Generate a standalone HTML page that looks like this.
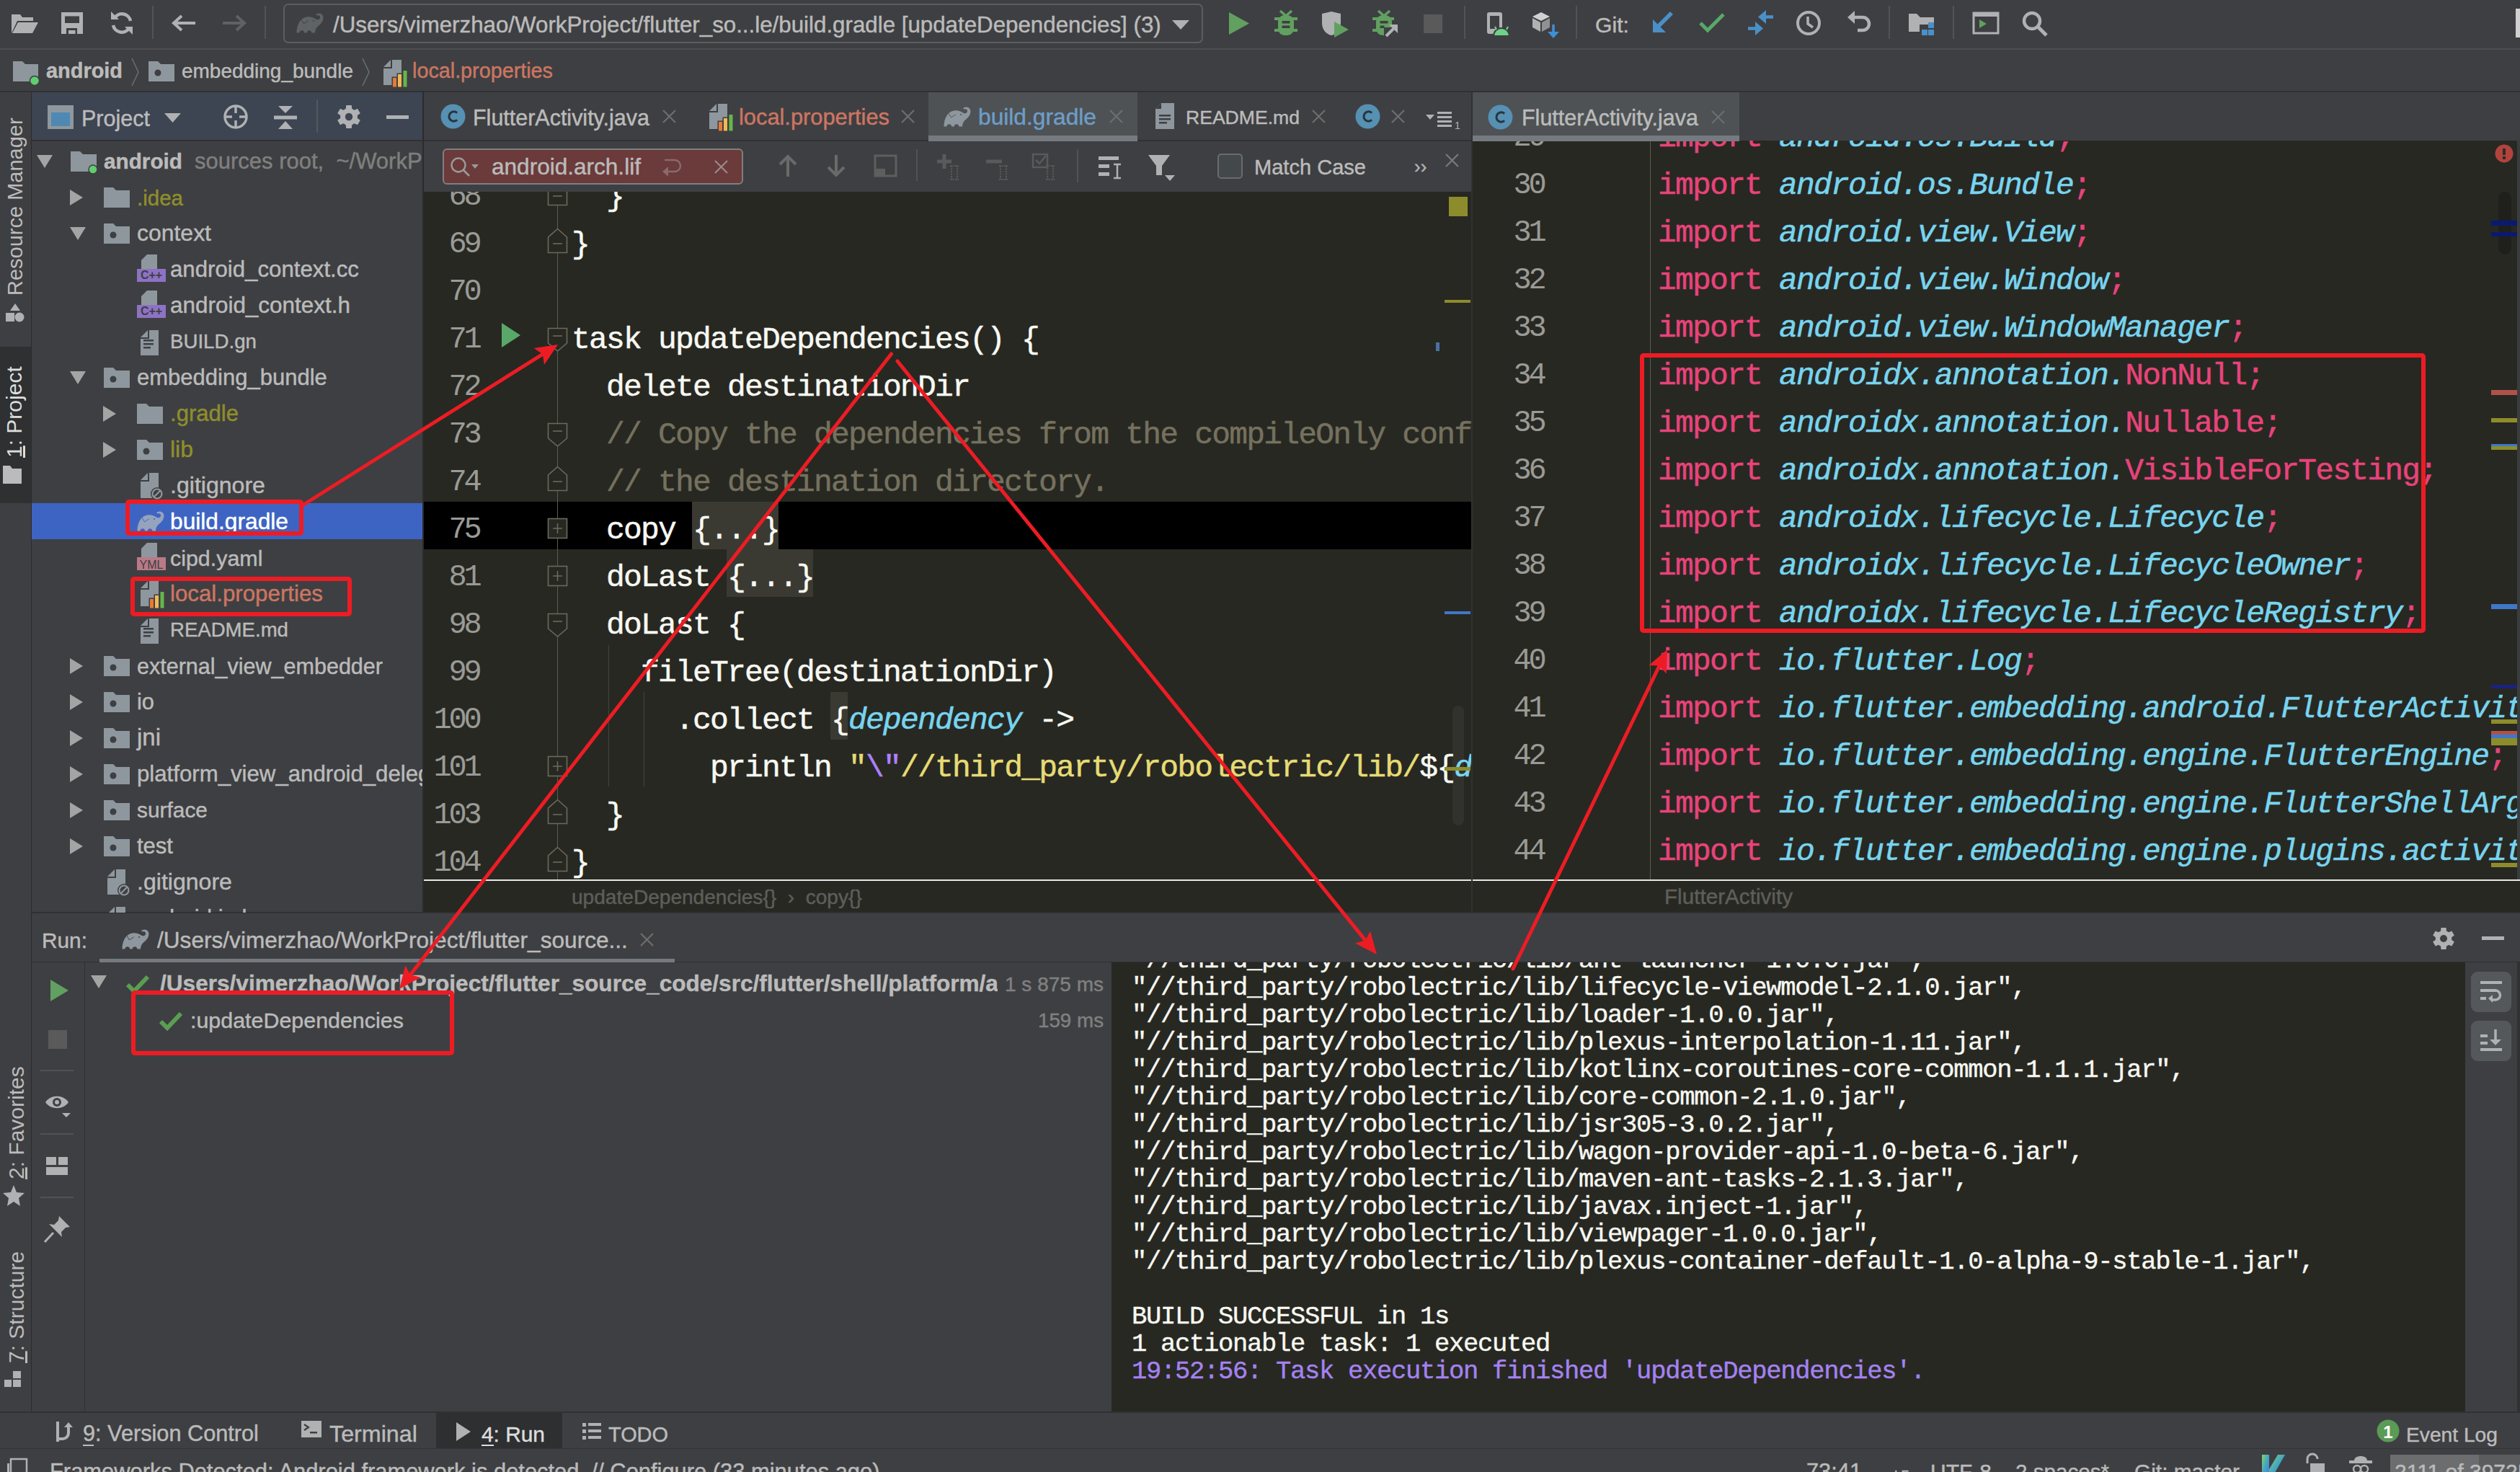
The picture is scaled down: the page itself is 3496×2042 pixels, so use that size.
<!DOCTYPE html><html><head><meta charset="utf-8"><style>html,body{margin:0;padding:0;}body{width:3496px;height:2042px;overflow:hidden;position:relative;background:#3e3f42;font-family:"Liberation Sans",sans-serif}div,svg{position:absolute;box-sizing:border-box}svg{overflow:visible}</style></head><body><div style="left:0px;top:0px;width:3496px;height:2042px;background:#3e3f42;"></div>
<div style="left:0px;top:67px;width:3496px;height:2px;background:#4b4d4f;"></div>
<div style="left:0px;top:126px;width:3496px;height:2px;background:#2f3133;"></div>
<div style="left:43px;top:127px;width:1px;height:1832px;background:#2b2b2b;"></div>
<div style="left:0px;top:481px;width:43px;height:217px;background:#2e3032;"></div>
<div style="left:44px;top:128px;width:542px;height:67px;background:#3d4452;"></div>
<div style="left:44px;top:194px;width:542px;height:2px;background:#2f3133;"></div>
<div style="left:586px;top:127px;width:2px;height:1139px;background:#2b2b2b;"></div>
<div style="left:588px;top:128px;width:1453px;height:67px;background:#3e3f42;"></div>
<div style="left:588px;top:194px;width:1453px;height:2px;background:#2f3133;"></div>
<div style="left:588px;top:196px;width:1453px;height:70px;background:#3e3f42;"></div>
<div style="left:588px;top:266px;width:1453px;height:1000px;background:#272822;"></div>
<div style="left:2041px;top:127px;width:2px;height:1139px;background:#303234;"></div>
<div style="left:2043px;top:128px;width:1453px;height:67px;background:#3e3f42;"></div>
<div style="left:2043px;top:195px;width:1453px;height:1071px;background:#272822;"></div>
<div style="left:588px;top:1220px;width:1453px;height:2px;background:#e8e8e8;"></div>
<div style="left:2043px;top:1220px;width:1453px;height:2px;background:#e8e8e8;"></div>
<div style="left:44px;top:1266px;width:3452px;height:69px;background:#3e3f42;"></div>
<div style="left:44px;top:1265px;width:3452px;height:2px;background:#2f3133;"></div>
<div style="left:44px;top:1334px;width:3452px;height:1px;background:#2f3133;"></div>
<div style="left:117px;top:1335px;width:1px;height:623px;background:#2f3133;"></div>
<div style="left:1542px;top:1335px;width:1878px;height:623px;background:#272822;"></div>
<div style="left:3420px;top:1335px;width:76px;height:623px;background:#3e3f42;"></div>
<div style="left:0px;top:1958px;width:3496px;height:2px;background:#2f3133;"></div>
<div style="left:605px;top:1960px;width:175px;height:50px;background:#2d2f31;"></div>
<div style="left:0px;top:2009px;width:3496px;height:1px;background:#323436;"></div>
<div style="left:588px;top:266px;width:1453px;height:954px;overflow:hidden">
<div style="left:0px;top:430px;width:1453px;height:66px;background:#000000;"></div>
<div style="left:372px;top:430px;width:120px;height:66px;background:#3b3a32;"></div>
<div style="left:420px;top:496px;width:120px;height:66px;background:#3b3a32;"></div>
<div style="left:564px;top:694px;width:24px;height:66px;background:#3b3a32;"></div>
<div style="left:256px;top:629px;width:1px;height:196px;background:#45443b;"></div>
<div style="left:305px;top:694px;width:1px;height:131px;background:#45443b;"></div>
<div style="left:185px;top:0px;width:1px;height:954px;background:#5d5c50;"></div>
<div style="left:34.4px;top:-27.1px;font-family:'Liberation Mono',monospace;font-size:42px;line-height:69.3px;color:#9a9a96;font-weight:normal;white-space:pre;letter-spacing:-4.2px">68</div>
<div style="left:205px;top:-28.2px;font-family:'Liberation Mono',monospace;font-size:43px;line-height:71.0px;color:#f8f8f2;font-weight:normal;white-space:pre;letter-spacing:-1.80px;-webkit-text-stroke:0.5px currentColor;"><span style="color:#f8f8f2;">  }</span></div>
<div style="left:34.4px;top:38.9px;font-family:'Liberation Mono',monospace;font-size:42px;line-height:69.3px;color:#9a9a96;font-weight:normal;white-space:pre;letter-spacing:-4.2px">69</div>
<div style="left:205px;top:37.8px;font-family:'Liberation Mono',monospace;font-size:43px;line-height:71.0px;color:#f8f8f2;font-weight:normal;white-space:pre;letter-spacing:-1.80px;-webkit-text-stroke:0.5px currentColor;"><span style="color:#f8f8f2;">}</span></div>
<div style="left:34.4px;top:104.8px;font-family:'Liberation Mono',monospace;font-size:42px;line-height:69.3px;color:#9a9a96;font-weight:normal;white-space:pre;letter-spacing:-4.2px">70</div>
<div style="left:34.4px;top:170.8px;font-family:'Liberation Mono',monospace;font-size:42px;line-height:69.3px;color:#9a9a96;font-weight:normal;white-space:pre;letter-spacing:-4.2px">71</div>
<div style="left:205px;top:169.8px;font-family:'Liberation Mono',monospace;font-size:43px;line-height:71.0px;color:#f8f8f2;font-weight:normal;white-space:pre;letter-spacing:-1.80px;-webkit-text-stroke:0.5px currentColor;"><span style="color:#f8f8f2;">task updateDependencies() {</span></div>
<div style="left:34.4px;top:236.8px;font-family:'Liberation Mono',monospace;font-size:42px;line-height:69.3px;color:#9a9a96;font-weight:normal;white-space:pre;letter-spacing:-4.2px">72</div>
<div style="left:205px;top:235.8px;font-family:'Liberation Mono',monospace;font-size:43px;line-height:71.0px;color:#f8f8f2;font-weight:normal;white-space:pre;letter-spacing:-1.80px;-webkit-text-stroke:0.5px currentColor;"><span style="color:#f8f8f2;">  delete destinationDir</span></div>
<div style="left:34.4px;top:302.9px;font-family:'Liberation Mono',monospace;font-size:42px;line-height:69.3px;color:#9a9a96;font-weight:normal;white-space:pre;letter-spacing:-4.2px">73</div>
<div style="left:205px;top:301.8px;font-family:'Liberation Mono',monospace;font-size:43px;line-height:71.0px;color:#f8f8f2;font-weight:normal;white-space:pre;letter-spacing:-1.80px;-webkit-text-stroke:0.5px currentColor;"><span style="color:#75715e;">  // Copy the dependencies from the compileOnly configuration into</span></div>
<div style="left:34.4px;top:368.9px;font-family:'Liberation Mono',monospace;font-size:42px;line-height:69.3px;color:#9a9a96;font-weight:normal;white-space:pre;letter-spacing:-4.2px">74</div>
<div style="left:205px;top:367.8px;font-family:'Liberation Mono',monospace;font-size:43px;line-height:71.0px;color:#f8f8f2;font-weight:normal;white-space:pre;letter-spacing:-1.80px;-webkit-text-stroke:0.5px currentColor;"><span style="color:#75715e;">  // the destination directory.</span></div>
<div style="left:34.4px;top:434.9px;font-family:'Liberation Mono',monospace;font-size:42px;line-height:69.3px;color:#9a9a96;font-weight:normal;white-space:pre;letter-spacing:-4.2px">75</div>
<div style="left:205px;top:433.8px;font-family:'Liberation Mono',monospace;font-size:43px;line-height:71.0px;color:#f8f8f2;font-weight:normal;white-space:pre;letter-spacing:-1.80px;-webkit-text-stroke:0.5px currentColor;"><span style="color:#f8f8f2;">  copy {...}</span></div>
<div style="left:34.4px;top:500.9px;font-family:'Liberation Mono',monospace;font-size:42px;line-height:69.3px;color:#9a9a96;font-weight:normal;white-space:pre;letter-spacing:-4.2px">81</div>
<div style="left:205px;top:499.8px;font-family:'Liberation Mono',monospace;font-size:43px;line-height:71.0px;color:#f8f8f2;font-weight:normal;white-space:pre;letter-spacing:-1.80px;-webkit-text-stroke:0.5px currentColor;"><span style="color:#f8f8f2;">  doLast {...}</span></div>
<div style="left:34.4px;top:566.9px;font-family:'Liberation Mono',monospace;font-size:42px;line-height:69.3px;color:#9a9a96;font-weight:normal;white-space:pre;letter-spacing:-4.2px">98</div>
<div style="left:205px;top:565.8px;font-family:'Liberation Mono',monospace;font-size:43px;line-height:71.0px;color:#f8f8f2;font-weight:normal;white-space:pre;letter-spacing:-1.80px;-webkit-text-stroke:0.5px currentColor;"><span style="color:#f8f8f2;">  doLast {</span></div>
<div style="left:34.4px;top:632.9px;font-family:'Liberation Mono',monospace;font-size:42px;line-height:69.3px;color:#9a9a96;font-weight:normal;white-space:pre;letter-spacing:-4.2px">99</div>
<div style="left:205px;top:631.8px;font-family:'Liberation Mono',monospace;font-size:43px;line-height:71.0px;color:#f8f8f2;font-weight:normal;white-space:pre;letter-spacing:-1.80px;-webkit-text-stroke:0.5px currentColor;"><span style="color:#f8f8f2;">    fileTree(destinationDir)</span></div>
<div style="left:13.399999999999999px;top:698.9px;font-family:'Liberation Mono',monospace;font-size:42px;line-height:69.3px;color:#9a9a96;font-weight:normal;white-space:pre;letter-spacing:-4.2px">100</div>
<div style="left:205px;top:697.8px;font-family:'Liberation Mono',monospace;font-size:43px;line-height:71.0px;color:#f8f8f2;font-weight:normal;white-space:pre;letter-spacing:-1.80px;-webkit-text-stroke:0.5px currentColor;"><span style="color:#f8f8f2;">      .collect {</span><span style="color:#78d4ee;font-style:italic">dependency</span><span style="color:#f8f8f2;"> -&gt;</span></div>
<div style="left:13.399999999999999px;top:764.9px;font-family:'Liberation Mono',monospace;font-size:42px;line-height:69.3px;color:#9a9a96;font-weight:normal;white-space:pre;letter-spacing:-4.2px">101</div>
<div style="left:205px;top:763.8px;font-family:'Liberation Mono',monospace;font-size:43px;line-height:71.0px;color:#f8f8f2;font-weight:normal;white-space:pre;letter-spacing:-1.80px;-webkit-text-stroke:0.5px currentColor;"><span style="color:#f8f8f2;">        println </span><span style="color:#e6db74;">&quot;</span><span style="color:#ae81ff;">\&quot;</span><span style="color:#e6db74;">//third_party/robolectric/lib/</span><span style="color:#f8f8f2;">${</span><span style="color:#78d4ee;font-style:italic">dependency.name</span></div>
<div style="left:13.399999999999999px;top:830.9px;font-family:'Liberation Mono',monospace;font-size:42px;line-height:69.3px;color:#9a9a96;font-weight:normal;white-space:pre;letter-spacing:-4.2px">103</div>
<div style="left:205px;top:829.8px;font-family:'Liberation Mono',monospace;font-size:43px;line-height:71.0px;color:#f8f8f2;font-weight:normal;white-space:pre;letter-spacing:-1.80px;-webkit-text-stroke:0.5px currentColor;"><span style="color:#f8f8f2;">  }</span></div>
<div style="left:13.399999999999999px;top:896.9px;font-family:'Liberation Mono',monospace;font-size:42px;line-height:69.3px;color:#9a9a96;font-weight:normal;white-space:pre;letter-spacing:-4.2px">104</div>
<div style="left:205px;top:895.8px;font-family:'Liberation Mono',monospace;font-size:43px;line-height:71.0px;color:#f8f8f2;font-weight:normal;white-space:pre;letter-spacing:-1.80px;-webkit-text-stroke:0.5px currentColor;"><span style="color:#f8f8f2;">}</span></div>
<svg style="left:171px;top:-16px;" width="30" height="36" viewBox="0 0 30 36"><path d="M1.5 34.5H27.5V13L14.5 1.5L1.5 13Z" fill="#272822" stroke="#6b6a5c" stroke-width="1.6"/><path d="M8 22H21" stroke="#6b6a5c" stroke-width="1.6"/></svg>
<svg style="left:171px;top:50px;" width="30" height="36" viewBox="0 0 30 36"><path d="M1.5 34.5H27.5V13L14.5 1.5L1.5 13Z" fill="#272822" stroke="#6b6a5c" stroke-width="1.6"/><path d="M8 22H21" stroke="#6b6a5c" stroke-width="1.6"/></svg>
<svg style="left:171px;top:188px;" width="30" height="38" viewBox="0 0 30 38"><path d="M1.5 1.5H27.5V22L14.5 33L1.5 22Z" fill="#272822" stroke="#6b6a5c" stroke-width="1.6"/><path d="M8 12H21" stroke="#6b6a5c" stroke-width="1.6"/></svg>
<svg style="left:171px;top:320px;" width="30" height="38" viewBox="0 0 30 38"><path d="M1.5 1.5H27.5V22L14.5 33L1.5 22Z" fill="#272822" stroke="#6b6a5c" stroke-width="1.6"/><path d="M8 12H21" stroke="#6b6a5c" stroke-width="1.6"/></svg>
<svg style="left:171px;top:380px;" width="30" height="36" viewBox="0 0 30 36"><path d="M1.5 34.5H27.5V13L14.5 1.5L1.5 13Z" fill="#272822" stroke="#6b6a5c" stroke-width="1.6"/><path d="M8 22H21" stroke="#6b6a5c" stroke-width="1.6"/></svg>
<svg style="left:171px;top:452px;" width="30" height="30" viewBox="0 0 30 30"><rect x="1.5" y="1.5" width="26" height="27" fill="#272822" stroke="#6b6a5c" stroke-width="1.6"/><path d="M8 15H21M14.5 8V22" stroke="#6b6a5c" stroke-width="1.6"/></svg>
<svg style="left:171px;top:518px;" width="30" height="30" viewBox="0 0 30 30"><rect x="1.5" y="1.5" width="26" height="27" fill="#272822" stroke="#6b6a5c" stroke-width="1.6"/><path d="M8 15H21M14.5 8V22" stroke="#6b6a5c" stroke-width="1.6"/></svg>
<svg style="left:171px;top:584px;" width="30" height="38" viewBox="0 0 30 38"><path d="M1.5 1.5H27.5V22L14.5 33L1.5 22Z" fill="#272822" stroke="#6b6a5c" stroke-width="1.6"/><path d="M8 12H21" stroke="#6b6a5c" stroke-width="1.6"/></svg>
<svg style="left:171px;top:782px;" width="30" height="30" viewBox="0 0 30 30"><rect x="1.5" y="1.5" width="26" height="27" fill="#272822" stroke="#6b6a5c" stroke-width="1.6"/><path d="M8 15H21M14.5 8V22" stroke="#6b6a5c" stroke-width="1.6"/></svg>
<svg style="left:171px;top:842px;" width="30" height="36" viewBox="0 0 30 36"><path d="M1.5 34.5H27.5V13L14.5 1.5L1.5 13Z" fill="#272822" stroke="#6b6a5c" stroke-width="1.6"/><path d="M8 22H21" stroke="#6b6a5c" stroke-width="1.6"/></svg>
<svg style="left:171px;top:908px;" width="30" height="36" viewBox="0 0 30 36"><path d="M1.5 34.5H27.5V13L14.5 1.5L1.5 13Z" fill="#272822" stroke="#6b6a5c" stroke-width="1.6"/><path d="M8 22H21" stroke="#6b6a5c" stroke-width="1.6"/></svg>
<svg style="left:107px;top:181px;" width="28" height="36" viewBox="0 0 28 36"><path d="M1 1L27 18L1 35Z" fill="#59a869"/></svg>
<div style="left:1422px;top:7px;width:26px;height:27px;background:#8d8c2c;"></div>
<div style="left:1416px;top:150px;width:36px;height:4px;background:#8d8c2c;"></div>
<div style="left:1404px;top:209px;width:5px;height:12px;background:#4a72a0;"></div>
<div style="left:1416px;top:582px;width:36px;height:4px;background:#3f78c8;"></div>
<div style="left:1427px;top:713px;width:16px;height:166px;background:rgba(255,255,255,0.05);border-radius:8px"></div>
<div style="left:1416px;top:798px;width:36px;height:5px;background:#8d8c2c;"></div>
</div>
<div style="left:793px;top:1225.9px;font-family:'Liberation Sans',sans-serif;font-size:28.095248469532255px;line-height:37.5px;color:#5e5e5a;font-weight:normal;white-space:pre;-webkit-text-stroke:0.45px currentColor;">updateDependencies{}  ›  copy{}</div>
<div style="left:2043px;top:195px;width:1453px;height:1025px;overflow:hidden">
<div style="left:246px;top:0px;width:1px;height:1025px;background:#5d5c50;"></div>
<div style="left:56.400000000000006px;top:-38.1px;font-family:'Liberation Mono',monospace;font-size:42px;line-height:69.3px;color:#9a9a96;font-weight:normal;white-space:pre;letter-spacing:-4.2px">29</div>
<div style="left:257px;top:-39.2px;font-family:'Liberation Mono',monospace;font-size:43px;line-height:71.0px;color:#f8f8f2;font-weight:normal;white-space:pre;letter-spacing:-1.80px;-webkit-text-stroke:0.5px currentColor;"><span style="color:#e8437a;">import </span><span style="color:#78d4ee;font-style:italic">android.os.Build</span><span style="color:#e8437a;">;</span></div>
<div style="left:56.400000000000006px;top:27.9px;font-family:'Liberation Mono',monospace;font-size:42px;line-height:69.3px;color:#9a9a96;font-weight:normal;white-space:pre;letter-spacing:-4.2px">30</div>
<div style="left:257px;top:26.8px;font-family:'Liberation Mono',monospace;font-size:43px;line-height:71.0px;color:#f8f8f2;font-weight:normal;white-space:pre;letter-spacing:-1.80px;-webkit-text-stroke:0.5px currentColor;"><span style="color:#e8437a;">import </span><span style="color:#78d4ee;font-style:italic">android.os.Bundle</span><span style="color:#e8437a;">;</span></div>
<div style="left:56.400000000000006px;top:93.8px;font-family:'Liberation Mono',monospace;font-size:42px;line-height:69.3px;color:#9a9a96;font-weight:normal;white-space:pre;letter-spacing:-4.2px">31</div>
<div style="left:257px;top:92.8px;font-family:'Liberation Mono',monospace;font-size:43px;line-height:71.0px;color:#f8f8f2;font-weight:normal;white-space:pre;letter-spacing:-1.80px;-webkit-text-stroke:0.5px currentColor;"><span style="color:#e8437a;">import </span><span style="color:#78d4ee;font-style:italic">android.view.View</span><span style="color:#e8437a;">;</span></div>
<div style="left:56.400000000000006px;top:159.8px;font-family:'Liberation Mono',monospace;font-size:42px;line-height:69.3px;color:#9a9a96;font-weight:normal;white-space:pre;letter-spacing:-4.2px">32</div>
<div style="left:257px;top:158.8px;font-family:'Liberation Mono',monospace;font-size:43px;line-height:71.0px;color:#f8f8f2;font-weight:normal;white-space:pre;letter-spacing:-1.80px;-webkit-text-stroke:0.5px currentColor;"><span style="color:#e8437a;">import </span><span style="color:#78d4ee;font-style:italic">android.view.Window</span><span style="color:#e8437a;">;</span></div>
<div style="left:56.400000000000006px;top:225.8px;font-family:'Liberation Mono',monospace;font-size:42px;line-height:69.3px;color:#9a9a96;font-weight:normal;white-space:pre;letter-spacing:-4.2px">33</div>
<div style="left:257px;top:224.8px;font-family:'Liberation Mono',monospace;font-size:43px;line-height:71.0px;color:#f8f8f2;font-weight:normal;white-space:pre;letter-spacing:-1.80px;-webkit-text-stroke:0.5px currentColor;"><span style="color:#e8437a;">import </span><span style="color:#78d4ee;font-style:italic">android.view.WindowManager</span><span style="color:#e8437a;">;</span></div>
<div style="left:56.400000000000006px;top:291.9px;font-family:'Liberation Mono',monospace;font-size:42px;line-height:69.3px;color:#9a9a96;font-weight:normal;white-space:pre;letter-spacing:-4.2px">34</div>
<div style="left:257px;top:290.8px;font-family:'Liberation Mono',monospace;font-size:43px;line-height:71.0px;color:#f8f8f2;font-weight:normal;white-space:pre;letter-spacing:-1.80px;-webkit-text-stroke:0.5px currentColor;"><span style="color:#e8437a;">import </span><span style="color:#78d4ee;font-style:italic">androidx.annotation.</span><span style="color:#e8437a;">NonNull;</span></div>
<div style="left:56.400000000000006px;top:357.9px;font-family:'Liberation Mono',monospace;font-size:42px;line-height:69.3px;color:#9a9a96;font-weight:normal;white-space:pre;letter-spacing:-4.2px">35</div>
<div style="left:257px;top:356.8px;font-family:'Liberation Mono',monospace;font-size:43px;line-height:71.0px;color:#f8f8f2;font-weight:normal;white-space:pre;letter-spacing:-1.80px;-webkit-text-stroke:0.5px currentColor;"><span style="color:#e8437a;">import </span><span style="color:#78d4ee;font-style:italic">androidx.annotation.</span><span style="color:#e8437a;">Nullable;</span></div>
<div style="left:56.400000000000006px;top:423.9px;font-family:'Liberation Mono',monospace;font-size:42px;line-height:69.3px;color:#9a9a96;font-weight:normal;white-space:pre;letter-spacing:-4.2px">36</div>
<div style="left:257px;top:422.8px;font-family:'Liberation Mono',monospace;font-size:43px;line-height:71.0px;color:#f8f8f2;font-weight:normal;white-space:pre;letter-spacing:-1.80px;-webkit-text-stroke:0.5px currentColor;"><span style="color:#e8437a;">import </span><span style="color:#78d4ee;font-style:italic">androidx.annotation.</span><span style="color:#e8437a;">VisibleForTesting;</span></div>
<div style="left:56.400000000000006px;top:489.9px;font-family:'Liberation Mono',monospace;font-size:42px;line-height:69.3px;color:#9a9a96;font-weight:normal;white-space:pre;letter-spacing:-4.2px">37</div>
<div style="left:257px;top:488.8px;font-family:'Liberation Mono',monospace;font-size:43px;line-height:71.0px;color:#f8f8f2;font-weight:normal;white-space:pre;letter-spacing:-1.80px;-webkit-text-stroke:0.5px currentColor;"><span style="color:#e8437a;">import </span><span style="color:#78d4ee;font-style:italic">androidx.lifecycle.Lifecycle</span><span style="color:#e8437a;">;</span></div>
<div style="left:56.400000000000006px;top:555.9px;font-family:'Liberation Mono',monospace;font-size:42px;line-height:69.3px;color:#9a9a96;font-weight:normal;white-space:pre;letter-spacing:-4.2px">38</div>
<div style="left:257px;top:554.8px;font-family:'Liberation Mono',monospace;font-size:43px;line-height:71.0px;color:#f8f8f2;font-weight:normal;white-space:pre;letter-spacing:-1.80px;-webkit-text-stroke:0.5px currentColor;"><span style="color:#e8437a;">import </span><span style="color:#78d4ee;font-style:italic">androidx.lifecycle.LifecycleOwner</span><span style="color:#e8437a;">;</span></div>
<div style="left:56.400000000000006px;top:621.9px;font-family:'Liberation Mono',monospace;font-size:42px;line-height:69.3px;color:#9a9a96;font-weight:normal;white-space:pre;letter-spacing:-4.2px">39</div>
<div style="left:257px;top:620.8px;font-family:'Liberation Mono',monospace;font-size:43px;line-height:71.0px;color:#f8f8f2;font-weight:normal;white-space:pre;letter-spacing:-1.80px;-webkit-text-stroke:0.5px currentColor;"><span style="color:#e8437a;">import </span><span style="color:#78d4ee;font-style:italic">androidx.lifecycle.LifecycleRegistry</span><span style="color:#e8437a;">;</span></div>
<div style="left:56.400000000000006px;top:687.9px;font-family:'Liberation Mono',monospace;font-size:42px;line-height:69.3px;color:#9a9a96;font-weight:normal;white-space:pre;letter-spacing:-4.2px">40</div>
<div style="left:257px;top:686.8px;font-family:'Liberation Mono',monospace;font-size:43px;line-height:71.0px;color:#f8f8f2;font-weight:normal;white-space:pre;letter-spacing:-1.80px;-webkit-text-stroke:0.5px currentColor;"><span style="color:#e8437a;">import </span><span style="color:#78d4ee;font-style:italic">io.flutter.Log</span><span style="color:#e8437a;">;</span></div>
<div style="left:56.400000000000006px;top:753.9px;font-family:'Liberation Mono',monospace;font-size:42px;line-height:69.3px;color:#9a9a96;font-weight:normal;white-space:pre;letter-spacing:-4.2px">41</div>
<div style="left:257px;top:752.8px;font-family:'Liberation Mono',monospace;font-size:43px;line-height:71.0px;color:#f8f8f2;font-weight:normal;white-space:pre;letter-spacing:-1.80px;-webkit-text-stroke:0.5px currentColor;"><span style="color:#e8437a;">import </span><span style="color:#78d4ee;font-style:italic">io.flutter.embedding.android.FlutterActivityAndFragmentDelegate</span><span style="color:#e8437a;">;</span></div>
<div style="left:56.400000000000006px;top:819.9px;font-family:'Liberation Mono',monospace;font-size:42px;line-height:69.3px;color:#9a9a96;font-weight:normal;white-space:pre;letter-spacing:-4.2px">42</div>
<div style="left:257px;top:818.8px;font-family:'Liberation Mono',monospace;font-size:43px;line-height:71.0px;color:#f8f8f2;font-weight:normal;white-space:pre;letter-spacing:-1.80px;-webkit-text-stroke:0.5px currentColor;"><span style="color:#e8437a;">import </span><span style="color:#78d4ee;font-style:italic">io.flutter.embedding.engine.FlutterEngine</span><span style="color:#e8437a;">;</span></div>
<div style="left:56.400000000000006px;top:885.9px;font-family:'Liberation Mono',monospace;font-size:42px;line-height:69.3px;color:#9a9a96;font-weight:normal;white-space:pre;letter-spacing:-4.2px">43</div>
<div style="left:257px;top:884.8px;font-family:'Liberation Mono',monospace;font-size:43px;line-height:71.0px;color:#f8f8f2;font-weight:normal;white-space:pre;letter-spacing:-1.80px;-webkit-text-stroke:0.5px currentColor;"><span style="color:#e8437a;">import </span><span style="color:#78d4ee;font-style:italic">io.flutter.embedding.engine.FlutterShellArgs</span><span style="color:#e8437a;">;</span></div>
<div style="left:56.400000000000006px;top:951.9px;font-family:'Liberation Mono',monospace;font-size:42px;line-height:69.3px;color:#9a9a96;font-weight:normal;white-space:pre;letter-spacing:-4.2px">44</div>
<div style="left:257px;top:950.8px;font-family:'Liberation Mono',monospace;font-size:43px;line-height:71.0px;color:#f8f8f2;font-weight:normal;white-space:pre;letter-spacing:-1.80px;-webkit-text-stroke:0.5px currentColor;"><span style="color:#e8437a;">import </span><span style="color:#78d4ee;font-style:italic">io.flutter.embedding.engine.plugins.activity.ActivityControlSurface</span><span style="color:#e8437a;">;</span></div>
<div style="left:1423px;top:71px;width:18px;height:87px;background:rgba(0,0,0,0.2);border-radius:9px"></div>
<div style="left:1413px;top:111px;width:36px;height:7px;background:#0a1a70;"></div>
<div style="left:1413px;top:127px;width:36px;height:6px;background:#0a1a70;"></div>
<div style="left:1413px;top:346px;width:36px;height:7px;background:#b0524a;"></div>
<div style="left:1413px;top:385px;width:36px;height:6px;background:#8d8c2c;"></div>
<div style="left:1413px;top:421px;width:36px;height:3px;background:#3f78c8;"></div>
<div style="left:1413px;top:424px;width:36px;height:5px;background:#8d8c2c;"></div>
<div style="left:1413px;top:643px;width:36px;height:7px;background:#3f78c8;"></div>
<div style="left:1413px;top:755px;width:36px;height:5px;background:#1a237e;"></div>
<div style="left:1413px;top:803px;width:36px;height:6px;background:#8d8c2c;"></div>
<div style="left:1413px;top:819px;width:36px;height:5px;background:#b0524a;"></div>
<div style="left:1413px;top:824px;width:36px;height:5px;background:#3f78c8;"></div>
<div style="left:1413px;top:829px;width:36px;height:10px;background:#8d8c2c;"></div>
<div style="left:1413px;top:1002px;width:36px;height:6px;background:#8d8c2c;"></div>
<svg style="left:1418px;top:5px;" width="26" height="26" viewBox="0 0 26 26"><circle cx="13" cy="13" r="12.5" fill="#b0443d"/><rect x="11" y="6" width="4" height="9" fill="#2b2b2b"/><rect x="11" y="17" width="4" height="4" fill="#2b2b2b"/></svg>
<div style="left:1449px;top:0px;width:4px;height:1025px;background:#3b3c3e;"></div>
</div>
<div style="left:2309px;top:1224.3px;font-family:'Liberation Sans',sans-serif;font-size:29.66280432235386px;line-height:39.6px;color:#5e5e5a;font-weight:normal;white-space:pre;-webkit-text-stroke:0.45px currentColor;">FlutterActivity</div>
<div style="left:44px;top:196px;width:542px;height:1070px;overflow:hidden">
<div style="left:0px;top:502px;width:542px;height:50px;background:#3e64c3;"></div>
<svg style="left:6px;top:18px;" width="24" height="20" viewBox="0 0 24 20"><path d="M1 1H23L12 19Z" fill="#a4a4a4"/></svg>
<svg style="left:54px;top:12px;" width="40" height="36" viewBox="0 0 40 36"><path d="M0 2H13L17 6H36V30H0Z" fill="#8e979e"/><circle cx="31" cy="27" r="6" fill="#5fcf6e" stroke="#3e3f42" stroke-width="1.5"/></svg>
<div style="left:100px;top:8.3px;font-family:'Liberation Sans',sans-serif;font-size:29.730651210364815px;line-height:39.6px;color:#bbbbbb;font-weight:bold;white-space:pre;-webkit-text-stroke:0.45px currentColor;">android</div>
<div style="left:226px;top:7.0px;font-family:'Liberation Sans',sans-serif;font-size:31px;line-height:41.3px;color:#7f7f7f;font-weight:normal;white-space:pre;-webkit-text-stroke:0.45px currentColor;">sources root,  ~/WorkProject/flutter</div>
<svg style="left:52px;top:66px;" width="20" height="24" viewBox="0 0 20 24"><path d="M1 1L19 12L1 23Z" fill="#a4a4a4"/></svg>
<svg style="left:100px;top:62px;" width="40" height="36" viewBox="0 0 40 36"><path d="M0 2H13L17 6H36V30H0Z" fill="#8e979e"/></svg>
<div style="left:146px;top:58.5px;font-family:'Liberation Sans',sans-serif;font-size:29.5164660949773px;line-height:39.4px;color:#8f8e2c;font-weight:normal;white-space:pre;-webkit-text-stroke:0.45px currentColor;">.idea</div>
<svg style="left:52px;top:118px;" width="24" height="20" viewBox="0 0 24 20"><path d="M1 1H23L12 19Z" fill="#a4a4a4"/></svg>
<svg style="left:100px;top:112px;" width="40" height="36" viewBox="0 0 40 36"><path d="M0 2H13L17 6H36V30H0Z" fill="#8e979e"/><circle cx="13" cy="18" r="4.5" fill="#3e3f42"/></svg>
<div style="left:146px;top:106.1px;font-family:'Liberation Sans',sans-serif;font-size:31.948819851693887px;line-height:42.6px;color:#bbbbbb;font-weight:normal;white-space:pre;-webkit-text-stroke:0.45px currentColor;">context</div>
<svg style="left:146px;top:157px;" width="42" height="40" viewBox="0 0 42 40"><path d="M14 0H28V20H6V8Z" fill="#8e979e"/><rect x="0" y="20" width="40" height="18" fill="#8e72c5"/><text x="20" y="34" font-family="Liberation Sans" font-size="16" font-weight="bold" fill="#3e3f42" text-anchor="middle">C++</text></svg>
<div style="left:192px;top:156.8px;font-family:'Liberation Sans',sans-serif;font-size:31.214862802040283px;line-height:41.6px;color:#bbbbbb;font-weight:normal;white-space:pre;-webkit-text-stroke:0.45px currentColor;">android_context.cc</div>
<svg style="left:146px;top:207px;" width="42" height="40" viewBox="0 0 42 40"><path d="M14 0H28V20H6V8Z" fill="#8e979e"/><rect x="0" y="20" width="40" height="18" fill="#8e72c5"/><text x="20" y="34" font-family="Liberation Sans" font-size="16" font-weight="bold" fill="#3e3f42" text-anchor="middle">C++</text></svg>
<div style="left:192px;top:206.6px;font-family:'Liberation Sans',sans-serif;font-size:31.448395149085048px;line-height:41.9px;color:#bbbbbb;font-weight:normal;white-space:pre;-webkit-text-stroke:0.45px currentColor;">android_context.h</div>
<svg style="left:150px;top:259px;" width="40" height="40" viewBox="0 0 40 40"><path d="M13 3H26V38H1V15H13Z" fill="#8e979e"/><path d="M1 13L11 3V13Z" fill="#8e979e"/><rect x="5" y="16" width="14" height="2.5" fill="#3e3f42"/><rect x="5" y="21" width="14" height="2.5" fill="#3e3f42"/><rect x="5" y="26" width="10" height="2.5" fill="#3e3f42"/></svg>
<div style="left:192px;top:260.3px;font-family:'Liberation Sans',sans-serif;font-size:27.679665537374756px;line-height:36.9px;color:#bbbbbb;font-weight:normal;white-space:pre;-webkit-text-stroke:0.45px currentColor;">BUILD.gn</div>
<svg style="left:52px;top:318px;" width="24" height="20" viewBox="0 0 24 20"><path d="M1 1H23L12 19Z" fill="#a4a4a4"/></svg>
<svg style="left:100px;top:312px;" width="40" height="36" viewBox="0 0 40 36"><path d="M0 2H13L17 6H36V30H0Z" fill="#8e979e"/><circle cx="13" cy="18" r="4.5" fill="#3e3f42"/></svg>
<div style="left:146px;top:307.0px;font-family:'Liberation Sans',sans-serif;font-size:31.034862789757906px;line-height:41.4px;color:#bbbbbb;font-weight:normal;white-space:pre;-webkit-text-stroke:0.45px currentColor;">embedding_bundle</div>
<svg style="left:98px;top:366px;" width="20" height="24" viewBox="0 0 20 24"><path d="M1 1L19 12L1 23Z" fill="#a4a4a4"/></svg>
<svg style="left:146px;top:362px;" width="40" height="36" viewBox="0 0 40 36"><path d="M0 2H13L17 6H36V30H0Z" fill="#8e979e"/></svg>
<div style="left:192px;top:356.9px;font-family:'Liberation Sans',sans-serif;font-size:31.072724485102466px;line-height:41.4px;color:#8f8e2c;font-weight:normal;white-space:pre;-webkit-text-stroke:0.45px currentColor;">.gradle</div>
<svg style="left:98px;top:416px;" width="20" height="24" viewBox="0 0 20 24"><path d="M1 1L19 12L1 23Z" fill="#a4a4a4"/></svg>
<svg style="left:146px;top:412px;" width="40" height="36" viewBox="0 0 40 36"><path d="M0 2H13L17 6H36V30H0Z" fill="#8e979e"/><circle cx="13" cy="18" r="4.5" fill="#3e3f42"/></svg>
<div style="left:192px;top:406.0px;font-family:'Liberation Sans',sans-serif;font-size:31.985007027955643px;line-height:42.6px;color:#8f8e2c;font-weight:normal;white-space:pre;-webkit-text-stroke:0.45px currentColor;">lib</div>
<svg style="left:150px;top:457px;" width="40" height="44" viewBox="0 0 40 44"><path d="M13 3H26V38H1V15H13Z" fill="#8e979e"/><path d="M1 13L11 3V13Z" fill="#8e979e"/><circle cx="24" cy="32" r="9" fill="#3e3f42"/><circle cx="24" cy="32" r="6.5" fill="none" stroke="#8e979e" stroke-width="2.2"/><path d="M19.5 36.5L28.5 27.5" stroke="#8e979e" stroke-width="2.2"/></svg>
<div style="left:192px;top:455.9px;font-family:'Liberation Sans',sans-serif;font-size:32.0899490997493px;line-height:42.8px;color:#bbbbbb;font-weight:normal;white-space:pre;-webkit-text-stroke:0.45px currentColor;">.gitignore</div>
<svg style="left:146px;top:513px;" width="38" height="28" viewBox="0 0 38 28"><path d="M0.5 27.5C0.5 17 5 9 11 6.5C17 4 23 5.5 27 8.5C29 10 32 9.5 33 7C33.5 4.5 31.5 2.5 29 3.5L27 2.5C29 -0.5 35 -0.5 37 4C38.5 9 36 14 30 18.5C27.5 20.5 26 24 26 27.5H21.4C21.4 23 14.7 23 14.7 27.5H11.2C11.2 23 4.4 23 4.4 27.5Z" fill="#95a3bd"/><path d="M6.5 8.5L10.6 15L16.7 10.7" fill="none" stroke="#3e64c3" stroke-width="0.9"/><circle cx="24" cy="11" r="1" fill="#3e64c3"/></svg>
<div style="left:192px;top:506.3px;font-family:'Liberation Sans',sans-serif;font-size:31.72147001934236px;line-height:42.3px;color:#ffffff;font-weight:normal;white-space:pre;-webkit-text-stroke:0.45px currentColor;">build.gradle</div>
<svg style="left:146px;top:557px;" width="42" height="40" viewBox="0 0 42 40"><path d="M14 0H28V20H6V8Z" fill="#8e979e"/><rect x="0" y="20" width="40" height="18" fill="#b97a88"/><text x="20" y="36" font-family="Liberation Sans" font-size="16" fill="#3e3f42" text-anchor="middle">YML</text></svg>
<div style="left:192px;top:557.6px;font-family:'Liberation Sans',sans-serif;font-size:30.42545320014798px;line-height:40.6px;color:#bbbbbb;font-weight:normal;white-space:pre;-webkit-text-stroke:0.45px currentColor;">cipd.yaml</div>
<svg style="left:150px;top:607px;" width="40" height="42" viewBox="0 0 40 42"><path d="M13 3H26V38H1V15H13Z" fill="#8e979e"/><path d="M1 13L11 3V13Z" fill="#8e979e"/><path d="M12.5 26.5H35V42H12.5Z" fill="#3e3f42"/><path d="M19.5 21.5H35V42H19.5Z" fill="#3e3f42"/><path d="M27 16.5H35V42H27Z" fill="#3e3f42"/><rect x="14" y="28" width="5" height="12.5" fill="#e57a3a"/><rect x="21" y="23" width="5" height="17.5" fill="#f0b955"/><rect x="28.5" y="18" width="5" height="22.5" fill="#67b64b"/></svg>
<div style="left:192px;top:606.7px;font-family:'Liberation Sans',sans-serif;font-size:31.26483397469871px;line-height:41.7px;color:#cc7662;font-weight:normal;white-space:pre;-webkit-text-stroke:0.45px currentColor;">local.properties</div>
<svg style="left:150px;top:659px;" width="40" height="40" viewBox="0 0 40 40"><path d="M13 3H26V38H1V15H13Z" fill="#8e979e"/><path d="M1 13L11 3V13Z" fill="#8e979e"/><rect x="5" y="16" width="14" height="2.5" fill="#3e3f42"/><rect x="5" y="21" width="14" height="2.5" fill="#3e3f42"/><rect x="5" y="26" width="10" height="2.5" fill="#3e3f42"/></svg>
<div style="left:192px;top:660.4px;font-family:'Liberation Sans',sans-serif;font-size:27.584756898817346px;line-height:36.8px;color:#bbbbbb;font-weight:normal;white-space:pre;-webkit-text-stroke:0.45px currentColor;">README.md</div>
<svg style="left:52px;top:716px;" width="20" height="24" viewBox="0 0 20 24"><path d="M1 1L19 12L1 23Z" fill="#a4a4a4"/></svg>
<svg style="left:100px;top:712px;" width="40" height="36" viewBox="0 0 40 36"><path d="M0 2H13L17 6H36V30H0Z" fill="#8e979e"/><circle cx="13" cy="18" r="4.5" fill="#3e3f42"/></svg>
<div style="left:146px;top:707.5px;font-family:'Liberation Sans',sans-serif;font-size:30.521369433877823px;line-height:40.7px;color:#bbbbbb;font-weight:normal;white-space:pre;-webkit-text-stroke:0.45px currentColor;">external_view_embedder</div>
<svg style="left:52px;top:766px;" width="20" height="24" viewBox="0 0 20 24"><path d="M1 1L19 12L1 23Z" fill="#a4a4a4"/></svg>
<svg style="left:100px;top:762px;" width="40" height="36" viewBox="0 0 40 36"><path d="M0 2H13L17 6H36V30H0Z" fill="#8e979e"/><circle cx="13" cy="18" r="4.5" fill="#3e3f42"/></svg>
<div style="left:146px;top:757.2px;font-family:'Liberation Sans',sans-serif;font-size:30.837181288897813px;line-height:41.1px;color:#bbbbbb;font-weight:normal;white-space:pre;-webkit-text-stroke:0.45px currentColor;">io</div>
<svg style="left:52px;top:816px;" width="20" height="24" viewBox="0 0 20 24"><path d="M1 1L19 12L1 23Z" fill="#a4a4a4"/></svg>
<svg style="left:100px;top:812px;" width="40" height="36" viewBox="0 0 40 36"><path d="M0 2H13L17 6H36V30H0Z" fill="#8e979e"/><circle cx="13" cy="18" r="4.5" fill="#3e3f42"/></svg>
<div style="left:146px;top:805.0px;font-family:'Liberation Sans',sans-serif;font-size:32.98453849757926px;line-height:44.0px;color:#bbbbbb;font-weight:normal;white-space:pre;-webkit-text-stroke:0.45px currentColor;">jni</div>
<svg style="left:52px;top:866px;" width="20" height="24" viewBox="0 0 20 24"><path d="M1 1L19 12L1 23Z" fill="#a4a4a4"/></svg>
<svg style="left:100px;top:862px;" width="40" height="36" viewBox="0 0 40 36"><path d="M0 2H13L17 6H36V30H0Z" fill="#8e979e"/><circle cx="13" cy="18" r="4.5" fill="#3e3f42"/></svg>
<div style="left:146px;top:856.8px;font-family:'Liberation Sans',sans-serif;font-size:31.2px;line-height:41.6px;color:#bbbbbb;font-weight:normal;white-space:pre;-webkit-text-stroke:0.45px currentColor;">platform_view_android_delegate</div>
<svg style="left:52px;top:916px;" width="20" height="24" viewBox="0 0 20 24"><path d="M1 1L19 12L1 23Z" fill="#a4a4a4"/></svg>
<svg style="left:100px;top:912px;" width="40" height="36" viewBox="0 0 40 36"><path d="M0 2H13L17 6H36V30H0Z" fill="#8e979e"/><circle cx="13" cy="18" r="4.5" fill="#3e3f42"/></svg>
<div style="left:146px;top:908.1px;font-family:'Liberation Sans',sans-serif;font-size:29.88659106070714px;line-height:39.8px;color:#bbbbbb;font-weight:normal;white-space:pre;-webkit-text-stroke:0.45px currentColor;">surface</div>
<svg style="left:52px;top:966px;" width="20" height="24" viewBox="0 0 20 24"><path d="M1 1L19 12L1 23Z" fill="#a4a4a4"/></svg>
<svg style="left:100px;top:962px;" width="40" height="36" viewBox="0 0 40 36"><path d="M0 2H13L17 6H36V30H0Z" fill="#8e979e"/><circle cx="13" cy="18" r="4.5" fill="#3e3f42"/></svg>
<div style="left:146px;top:957.0px;font-family:'Liberation Sans',sans-serif;font-size:31.022782355792533px;line-height:41.4px;color:#bbbbbb;font-weight:normal;white-space:pre;-webkit-text-stroke:0.45px currentColor;">test</div>
<svg style="left:104px;top:1007px;" width="40" height="44" viewBox="0 0 40 44"><path d="M13 3H26V38H1V15H13Z" fill="#8e979e"/><path d="M1 13L11 3V13Z" fill="#8e979e"/><circle cx="24" cy="32" r="9" fill="#3e3f42"/><circle cx="24" cy="32" r="6.5" fill="none" stroke="#8e979e" stroke-width="2.2"/><path d="M19.5 36.5L28.5 27.5" stroke="#8e979e" stroke-width="2.2"/></svg>
<div style="left:146px;top:1005.9px;font-family:'Liberation Sans',sans-serif;font-size:32.0899490997493px;line-height:42.8px;color:#bbbbbb;font-weight:normal;white-space:pre;-webkit-text-stroke:0.45px currentColor;">.gitignore</div>
<svg style="left:104px;top:1059px;" width="40" height="40" viewBox="0 0 40 40"><path d="M13 3H26V38H1V15H13Z" fill="#8e979e"/><path d="M1 13L11 3V13Z" fill="#8e979e"/><rect x="5" y="16" width="14" height="2.5" fill="#3e3f42"/><rect x="5" y="21" width="14" height="2.5" fill="#3e3f42"/><rect x="5" y="26" width="10" height="2.5" fill="#3e3f42"/></svg>
<div style="left:146px;top:1056.8px;font-family:'Liberation Sans',sans-serif;font-size:31.2px;line-height:41.6px;color:#bbbbbb;font-weight:normal;white-space:pre;-webkit-text-stroke:0.45px currentColor;">android.iml</div>
</div>
<svg style="left:611px;top:144px;" width="35" height="35" viewBox="0 0 35 35"><circle cx="17.5" cy="17.5" r="17.0" fill="#5690b2"/><path d="M23.1 12.6A6.65 6.65 0 1 0 23.1 22.400000000000002" fill="none" stroke="#26353d" stroke-width="2.975"/></svg>
<div style="left:656px;top:142.5px;font-family:'Liberation Sans',sans-serif;font-size:30.477375213808116px;line-height:40.6px;color:#bbbbbb;font-weight:normal;white-space:pre;-webkit-text-stroke:0.45px currentColor;">FlutterActivity.java</div>
<svg style="left:919px;top:152px;" width="19" height="19" viewBox="0 0 19 19"><path d="M1 1L18 18M18 1L1 18" stroke="#6e6e6e" stroke-width="2.2"/></svg>
<svg style="left:983px;top:141px;" width="40" height="42" viewBox="0 0 40 42"><path d="M13 3H26V38H1V15H13Z" fill="#8e979e"/><path d="M1 13L11 3V13Z" fill="#8e979e"/><path d="M12.5 26.5H35V42H12.5Z" fill="#3e3f42"/><path d="M19.5 21.5H35V42H19.5Z" fill="#3e3f42"/><path d="M27 16.5H35V42H27Z" fill="#3e3f42"/><rect x="14" y="28" width="5" height="12.5" fill="#e57a3a"/><rect x="21" y="23" width="5" height="17.5" fill="#f0b955"/><rect x="28.5" y="18" width="5" height="22.5" fill="#67b64b"/></svg>
<div style="left:1025px;top:142.2px;font-family:'Liberation Sans',sans-serif;font-size:30.822407078830334px;line-height:41.1px;color:#cc7662;font-weight:normal;white-space:pre;-webkit-text-stroke:0.45px currentColor;">local.properties</div>
<svg style="left:1250px;top:152px;" width="19" height="19" viewBox="0 0 19 19"><path d="M1 1L18 18M18 1L1 18" stroke="#6e6e6e" stroke-width="2.2"/></svg>
<div style="left:1288px;top:128px;width:290px;height:67px;background:#4e5254;"></div>
<div style="left:1288px;top:188px;width:290px;height:8px;background:#747a80;"></div>
<svg style="left:1309px;top:148px;" width="38" height="28" viewBox="0 0 38 28"><path d="M0.5 27.5C0.5 17 5 9 11 6.5C17 4 23 5.5 27 8.5C29 10 32 9.5 33 7C33.5 4.5 31.5 2.5 29 3.5L27 2.5C29 -0.5 35 -0.5 37 4C38.5 9 36 14 30 18.5C27.5 20.5 26 24 26 27.5H21.4C21.4 23 14.7 23 14.7 27.5H11.2C11.2 23 4.4 23 4.4 27.5Z" fill="#8e979e"/><path d="M6.5 8.5L10.6 15L16.7 10.7" fill="none" stroke="#4e5254" stroke-width="0.9"/><circle cx="24" cy="11" r="1" fill="#4e5254"/></svg>
<div style="left:1357px;top:141.3px;font-family:'Liberation Sans',sans-serif;font-size:31.721470019342362px;line-height:42.3px;color:#6e9dc8;font-weight:normal;white-space:pre;-webkit-text-stroke:0.45px currentColor;">build.gradle</div>
<svg style="left:1539px;top:152px;" width="19" height="19" viewBox="0 0 19 19"><path d="M1 1L18 18M18 1L1 18" stroke="#6e6e6e" stroke-width="2.2"/></svg>
<svg style="left:1603px;top:143px;" width="28" height="38" viewBox="0 0 28 38"><path d="M8 0H26V36H0V8Z" fill="#8e979e"/><path d="M0 8L8 0V8Z" fill="#3e3f42"/><rect x="5" y="16" width="16" height="2.5" fill="#3e3f42"/><rect x="5" y="21" width="16" height="2.5" fill="#3e3f42"/><rect x="5" y="26" width="11" height="2.5" fill="#3e3f42"/></svg>
<div style="left:1645px;top:146.4px;font-family:'Liberation Sans',sans-serif;font-size:26.57555847568988px;line-height:35.4px;color:#bbbbbb;font-weight:normal;white-space:pre;-webkit-text-stroke:0.45px currentColor;">README.md</div>
<svg style="left:1820px;top:152px;" width="19" height="19" viewBox="0 0 19 19"><path d="M1 1L18 18M18 1L1 18" stroke="#6e6e6e" stroke-width="2.2"/></svg>
<svg style="left:1880px;top:144px;" width="35" height="35" viewBox="0 0 35 35"><circle cx="17.5" cy="17.5" r="17.0" fill="#5690b2"/><path d="M23.1 12.6A6.65 6.65 0 1 0 23.1 22.400000000000002" fill="none" stroke="#26353d" stroke-width="2.975"/></svg>
<svg style="left:1930px;top:152px;" width="19" height="19" viewBox="0 0 19 19"><path d="M1 1L18 18M18 1L1 18" stroke="#6e6e6e" stroke-width="2.2"/></svg>
<svg style="left:1978px;top:153px;" width="52" height="32" viewBox="0 0 52 32"><path d="M0 6H12L6 13Z" fill="#afb1b3"/><rect x="16" y="2" width="20" height="3" fill="#afb1b3"/><rect x="16" y="8" width="20" height="3" fill="#afb1b3"/><rect x="16" y="14" width="20" height="3" fill="#afb1b3"/><rect x="16" y="20" width="20" height="3" fill="#afb1b3"/><text x="40" y="26" font-family="Liberation Sans" font-size="14" fill="#afb1b3">1</text></svg>
<div style="left:2043px;top:128px;width:370px;height:67px;background:#4e5254;"></div>
<div style="left:2043px;top:188px;width:370px;height:8px;background:#747a80;"></div>
<svg style="left:2064px;top:145px;" width="35" height="35" viewBox="0 0 35 35"><circle cx="17.5" cy="17.5" r="17.0" fill="#5690b2"/><path d="M23.1 12.6A6.65 6.65 0 1 0 23.1 22.400000000000002" fill="none" stroke="#26353d" stroke-width="2.975"/></svg>
<div style="left:2111px;top:142.5px;font-family:'Liberation Sans',sans-serif;font-size:30.477375213808116px;line-height:40.6px;color:#bbbbbb;font-weight:normal;white-space:pre;-webkit-text-stroke:0.45px currentColor;">FlutterActivity.java</div>
<svg style="left:2374px;top:153px;" width="19" height="19" viewBox="0 0 19 19"><path d="M1 1L18 18M18 1L1 18" stroke="#6e6e6e" stroke-width="2.2"/></svg>
<div style="left:614px;top:206px;width:417px;height:50px;background:#6b3a3a;border:2px solid #7f7f7f;border-radius:6px;box-sizing:border-box"></div>
<svg style="left:624px;top:217px;" width="42" height="32" viewBox="0 0 42 32"><circle cx="12" cy="12" r="9.5" fill="none" stroke="#9a9a9a" stroke-width="2.4"/><path d="M19 19L27 27" stroke="#9a9a9a" stroke-width="2.6"/><path d="M30 11H40L35 17Z" fill="#9a9a9a"/></svg>
<div style="left:682px;top:210.4px;font-family:'Liberation Sans',sans-serif;font-size:31.561643835616437px;line-height:42.1px;color:#bbbbbb;font-weight:normal;white-space:pre;-webkit-text-stroke:0.45px currentColor;">android.arch.lif</div>
<svg style="left:916px;top:216px;" width="34" height="32" viewBox="0 0 34 32"><path d="M6 6H20A8 8 0 0 1 20 22H8" fill="none" stroke="#8a6a6a" stroke-width="2.5"/><path d="M11 15L3 22L11 29Z" fill="#8a6a6a"/></svg>
<svg style="left:991px;top:222px;" width="19" height="19" viewBox="0 0 19 19"><path d="M1 1L18 18M18 1L1 18" stroke="#9a8a8a" stroke-width="2.2"/></svg>
<svg style="left:1079px;top:214px;" width="28" height="32" viewBox="0 0 28 32"><path d="M14 3V31" stroke="#6a6a6a" stroke-width="4"/><path d="M3 14L14 3L25 14" fill="none" stroke="#6a6a6a" stroke-width="4"/></svg>
<svg style="left:1146px;top:214px;" width="28" height="32" viewBox="0 0 28 32"><path d="M14 1V29" stroke="#6a6a6a" stroke-width="4"/><path d="M3 18L14 29L25 18" fill="none" stroke="#6a6a6a" stroke-width="4"/></svg>
<svg style="left:1212px;top:214px;" width="34" height="32" viewBox="0 0 34 32"><rect x="2" y="2" width="29" height="28" fill="none" stroke="#5e5e5e" stroke-width="3"/><rect x="2" y="20" width="14" height="10" fill="#5e5e5e"/></svg>
<div style="left:1271px;top:207px;width:2px;height:44px;background:#505254;"></div>
<svg style="left:1298px;top:212px;" width="40" height="40" viewBox="0 0 40 40"><path d="M12 2V22M2 12H22" stroke="#5a5a5a" stroke-width="5"/><path d="M22 18V37M30 18V37M20 18H32M20 37H32" stroke="#5a5a5a" stroke-width="2" stroke-dasharray="2 1.5"/></svg>
<svg style="left:1366px;top:212px;" width="40" height="40" viewBox="0 0 40 40"><path d="M2 12H24" stroke="#5a5a5a" stroke-width="5"/><path d="M22 18V37M30 18V37M20 18H32M20 37H32" stroke="#5a5a5a" stroke-width="2" stroke-dasharray="2 1.5"/></svg>
<svg style="left:1431px;top:212px;" width="40" height="40" viewBox="0 0 40 40"><rect x="2" y="2" width="20" height="18" fill="none" stroke="#5a5a5a" stroke-width="2.5"/><path d="M6 10L11 15L20 4" fill="none" stroke="#5a5a5a" stroke-width="2.5"/><path d="M22 18V37M30 18V37M20 18H32M20 37H32" stroke="#5a5a5a" stroke-width="2" stroke-dasharray="2 1.5"/></svg>
<div style="left:1494px;top:207px;width:2px;height:46px;background:#505254;"></div>
<svg style="left:1524px;top:216px;" width="36" height="34" viewBox="0 0 36 34"><rect x="0" y="1" width="28" height="5" fill="#afb1b3"/><rect x="0" y="12" width="15" height="5" fill="#afb1b3"/><rect x="0" y="23" width="15" height="5" fill="#afb1b3"/><path d="M26 12V31M21 12H31M21 31H31" stroke="#afb1b3" stroke-width="2.5"/></svg>
<svg style="left:1592px;top:214px;" width="40" height="40" viewBox="0 0 40 40"><path d="M1 1H31L20 16V29H12V16Z" fill="#afb1b3"/><path d="M24 29H38L31 37Z" fill="#afb1b3"/></svg>
<div style="left:1689px;top:213px;width:35px;height:35px;background:#43494a;border:2px solid #6b6b6b;border-radius:5px;box-sizing:border-box"></div>
<div style="left:1740px;top:212.9px;font-family:'Liberation Sans',sans-serif;font-size:29.05256992238981px;line-height:38.7px;color:#bbbbbb;font-weight:normal;white-space:pre;-webkit-text-stroke:0.45px currentColor;">Match Case</div>
<div style="left:1962px;top:214.0px;font-family:'Liberation Sans',sans-serif;font-size:26px;line-height:34.7px;color:#afb1b3;font-weight:normal;white-space:pre;-webkit-text-stroke:0.45px currentColor;">››</div>
<svg style="left:2005px;top:213px;" width="19" height="19" viewBox="0 0 19 19"><path d="M1 1L18 18M18 1L1 18" stroke="#7a7a7a" stroke-width="2.2"/></svg>
<svg style="left:16px;top:18px;" width="38" height="30" viewBox="0 0 38 30"><path d="M0 2H12L15 6H30V11H8L0 28Z" fill="#afb1b3"/><path d="M9 13H37L29 28H1Z" fill="#afb1b3"/></svg>
<svg style="left:85px;top:17px;" width="31" height="30" viewBox="0 0 31 30"><rect x="0" y="0" width="30" height="30" fill="#afb1b3"/><rect x="5" y="5.5" width="20" height="9.5" fill="#3e3f42"/><rect x="7" y="22" width="15" height="8" fill="#3e3f42"/><rect x="10" y="25" width="9.5" height="5" fill="#afb1b3"/></svg>
<svg style="left:152px;top:16px;" width="34" height="32" viewBox="0 0 34 32"><g transform="translate(34,0) scale(-1,1)"><path d="M5 13A12 12 0 0 1 27 9" fill="none" stroke="#afb1b3" stroke-width="4.5"/><path d="M29 19A12 12 0 0 1 7 23" fill="none" stroke="#afb1b3" stroke-width="4.5"/><path d="M21 11H32V0Z" fill="#afb1b3"/><path d="M13 21H2V32Z" fill="#afb1b3"/></g></svg>
<div style="left:211px;top:8px;width:2px;height:46px;background:#515355;"></div>
<svg style="left:238px;top:20px;" width="34" height="24" viewBox="0 0 34 24"><path d="M4 12H33" stroke="#afb1b3" stroke-width="4"/><path d="M14 2L3 12L14 22" fill="none" stroke="#afb1b3" stroke-width="4"/></svg>
<svg style="left:308px;top:20px;" width="34" height="24" viewBox="0 0 34 24"><path d="M1 12H30" stroke="#5f6163" stroke-width="4"/><path d="M20 2L31 12L20 22" fill="none" stroke="#5f6163" stroke-width="4"/></svg>
<div style="left:367px;top:8px;width:2px;height:46px;background:#515355;"></div>
<div style="left:393px;top:5px;width:1276px;height:55px;background:#3e3f42;border:2px solid #5b5d5f;border-radius:7px;box-sizing:border-box"></div>
<svg style="left:411px;top:18px;" width="38" height="28" viewBox="0 0 38 28"><path d="M0.5 27.5C0.5 17 5 9 11 6.5C17 4 23 5.5 27 8.5C29 10 32 9.5 33 7C33.5 4.5 31.5 2.5 29 3.5L27 2.5C29 -0.5 35 -0.5 37 4C38.5 9 36 14 30 18.5C27.5 20.5 26 24 26 27.5H21.4C21.4 23 14.7 23 14.7 27.5H11.2C11.2 23 4.4 23 4.4 27.5Z" fill="#5f6366"/><path d="M6.5 8.5L10.6 15L16.7 10.7" fill="none" stroke="#3c3f41" stroke-width="0.9"/><circle cx="24" cy="11" r="1" fill="#3c3f41"/></svg>
<div style="left:462px;top:13.7px;font-family:'Liberation Sans',sans-serif;font-size:31.29151542746263px;line-height:41.7px;color:#bbbbbb;font-weight:normal;white-space:pre;-webkit-text-stroke:0.45px currentColor;">/Users/vimerzhao/WorkProject/flutter_so...le/build.gradle [updateDependencies] (3)</div>
<svg style="left:1626px;top:28px;" width="24" height="14" viewBox="0 0 24 14"><path d="M0 0H24L12 13Z" fill="#afb1b3"/></svg>
<svg style="left:1704px;top:17px;" width="30" height="31" viewBox="0 0 30 31"><path d="M1 0L29 15.5L1 31Z" fill="#61a060"/></svg>
<svg style="left:1768px;top:14px;" width="32" height="36" viewBox="0 0 32 36"><path d="M8 1L16 8L24 1" fill="none" stroke="#61a060" stroke-width="3.5"/><rect x="5" y="7" width="22" height="28" rx="9" fill="#61a060"/><rect x="0" y="10" width="32" height="4" fill="#61a060"/><rect x="0" y="26" width="32" height="4" fill="#61a060"/><rect x="10.5" y="15" width="11" height="3.5" fill="#3e3f42"/><rect x="10.5" y="21.5" width="11" height="3.5" fill="#3e3f42"/></svg>
<svg style="left:1833px;top:16px;" width="40" height="36" viewBox="0 0 40 36"><path d="M1 3L14 0L27 3V16C27 26 20 32 14 33C8 32 1 26 1 16Z" fill="#afb1b3"/><path d="M14 0V33" stroke="#3e3f42" stroke-width="0"/><path d="M18 14L38 25L18 36Z" fill="#61a060"/></svg>
<svg style="left:1904px;top:14px;" width="38" height="38" viewBox="0 0 38 38"><path d="M8 1L16 8L24 1" fill="none" stroke="#61a060" stroke-width="3.5"/><rect x="5" y="7" width="22" height="28" rx="9" fill="#61a060"/><rect x="0" y="10" width="30" height="4" fill="#61a060"/><rect x="0" y="26" width="14" height="4" fill="#61a060"/><rect x="10.5" y="15" width="11" height="3.5" fill="#3e3f42"/><rect x="10.5" y="21.5" width="6" height="3.5" fill="#3e3f42"/><path d="M16 24H38V38H16Z" fill="#3e3f42"/><path d="M19 36L33 22" stroke="#afb1b3" stroke-width="4"/><path d="M23 20H35V32Z" fill="#afb1b3"/></svg>
<div style="left:1975px;top:20px;width:26px;height:26px;background:#5a5a5a;"></div>
<div style="left:2031px;top:8px;width:2px;height:46px;background:#515355;"></div>
<svg style="left:2062px;top:16px;" width="34" height="36" viewBox="0 0 34 36"><rect x="1" y="1" width="21" height="30" rx="3" fill="#afb1b3"/><rect x="5" y="6" width="13" height="18" fill="#3e3f42"/><path d="M10 34A11 11 0 0 1 32 34Z" fill="#6dd38a" stroke="#3e3f42" stroke-width="2"/><path d="M14 25L12 21M28 25L30 21" stroke="#6dd38a" stroke-width="2.2"/></svg>
<svg style="left:2125px;top:16px;" width="40" height="38" viewBox="0 0 40 38"><path d="M1 7L13 1L25 7L13 13Z" fill="#cfd1d3"/><path d="M1 9L12 15V28L1 22Z" fill="#afb1b3"/><path d="M14 15L25 9V22L14 28Z" fill="#8f9193"/><path d="M30 18V34" stroke="#3f8fd6" stroke-width="3.5"/><path d="M22 28L30 37L38 28Z" fill="#3f8fd6"/></svg>
<div style="left:2186px;top:8px;width:2px;height:46px;background:#515355;"></div>
<div style="left:2213px;top:14.8px;font-family:'Liberation Sans',sans-serif;font-size:30.212936922458816px;line-height:40.3px;color:#bbbbbb;font-weight:normal;white-space:pre;-webkit-text-stroke:0.45px currentColor;">Git:</div>
<svg style="left:2292px;top:16px;" width="30" height="30" viewBox="0 0 30 30"><path d="M27 2L9 20" stroke="#4a90c8" stroke-width="5.5"/><path d="M1 11V29H19Z" fill="#4a90c8"/></svg>
<svg style="left:2357px;top:18px;" width="36" height="28" viewBox="0 0 36 28"><path d="M2 14L12 24L34 2" fill="none" stroke="#59a869" stroke-width="5"/></svg>
<svg style="left:2424px;top:13px;" width="38" height="38" viewBox="0 0 38 38"><path d="M21 10.5H36" stroke="#4a90c8" stroke-width="4.5"/><path d="M15 10.5L26 1V20Z" fill="#4a90c8"/><path d="M1 26.5H16" stroke="#4a90c8" stroke-width="4.5"/><path d="M22 26.5L11 17V36Z" fill="#4a90c8"/></svg>
<svg style="left:2491px;top:14px;" width="38" height="38" viewBox="0 0 38 38"><circle cx="18" cy="18" r="15" fill="none" stroke="#afb1b3" stroke-width="4"/><path d="M17 9V19L24 24" fill="none" stroke="#afb1b3" stroke-width="3.5"/></svg>
<svg style="left:2562px;top:14px;" width="36" height="36" viewBox="0 0 36 36"><path d="M10 10H22A9 9 0 0 1 22 28H15" fill="none" stroke="#afb1b3" stroke-width="4.5"/><path d="M1 10L11 1V19Z" fill="#afb1b3"/></svg>
<div style="left:2620px;top:8px;width:2px;height:46px;background:#515355;"></div>
<svg style="left:2648px;top:18px;" width="40" height="34" viewBox="0 0 40 34"><path d="M0 1H11L16 6H35V26H0Z" fill="#afb1b3"/><rect x="15" y="16" width="22" height="16" fill="#3e3f42"/><rect x="27" y="13" width="8" height="8" fill="#4a90c8"/><rect x="18" y="23" width="8" height="8" fill="#4a90c8"/><rect x="27" y="23" width="8" height="8" fill="#4a90c8"/></svg>
<div style="left:2709px;top:8px;width:2px;height:46px;background:#515355;"></div>
<svg style="left:2736px;top:16px;" width="38" height="32" viewBox="0 0 38 32"><rect x="2" y="2" width="34" height="28" fill="none" stroke="#afb1b3" stroke-width="3"/><rect x="2" y="2" width="34" height="5" fill="#afb1b3"/><path d="M10 11L20 17L10 23Z" fill="#61a060"/></svg>
<svg style="left:2804px;top:14px;" width="40" height="40" viewBox="0 0 40 40"><circle cx="15" cy="15" r="11" fill="none" stroke="#afb1b3" stroke-width="4.5"/><path d="M23 23L35 35" stroke="#afb1b3" stroke-width="5"/></svg>
<div style="left:3490px;top:12px;width:6px;height:40px;background:#d0d0d0;"></div>
<svg style="left:18px;top:84px;" width="40" height="36" viewBox="0 0 40 36"><path d="M0 1H13L17 5H35V29H0Z" fill="#8e979e"/><circle cx="30" cy="28" r="6.5" fill="#5fcf6e" stroke="#3e3f42" stroke-width="1.5"/></svg>
<div style="left:64px;top:79.1px;font-family:'Liberation Sans',sans-serif;font-size:28.91237640640982px;line-height:38.5px;color:#bbbbbb;font-weight:bold;white-space:pre;-webkit-text-stroke:0.45px currentColor;">android</div>
<svg style="left:182px;top:80px;" width="12" height="40" viewBox="0 0 12 40"><path d="M1 1L10 20L1 39" fill="none" stroke="#6a6c6e" stroke-width="1.6"/></svg>
<svg style="left:206px;top:84px;" width="38" height="32" viewBox="0 0 38 32"><path d="M0 1H13L17 5H36V29H0Z" fill="#8e979e"/><circle cx="13" cy="17" r="4.5" fill="#3e3f42"/></svg>
<div style="left:252px;top:80.0px;font-family:'Liberation Sans',sans-serif;font-size:27.97839903016054px;line-height:37.3px;color:#bbbbbb;font-weight:normal;white-space:pre;-webkit-text-stroke:0.45px currentColor;">embedding_bundle</div>
<svg style="left:502px;top:80px;" width="12" height="40" viewBox="0 0 12 40"><path d="M1 1L10 20L1 39" fill="none" stroke="#6a6c6e" stroke-width="1.6"/></svg>
<svg style="left:531px;top:80px;" width="40" height="42" viewBox="0 0 40 42"><path d="M13 3H26V38H1V15H13Z" fill="#8e979e"/><path d="M1 13L11 3V13Z" fill="#8e979e"/><path d="M12.5 26.5H35V42H12.5Z" fill="#3e3f42"/><path d="M19.5 21.5H35V42H19.5Z" fill="#3e3f42"/><path d="M27 16.5H35V42H27Z" fill="#3e3f42"/><rect x="14" y="28" width="5" height="12.5" fill="#e57a3a"/><rect x="21" y="23" width="5" height="17.5" fill="#f0b955"/><rect x="28.5" y="18" width="5" height="22.5" fill="#67b64b"/></svg>
<div style="left:572px;top:79.2px;font-family:'Liberation Sans',sans-serif;font-size:28.75774823144457px;line-height:38.3px;color:#cc7662;font-weight:normal;white-space:pre;-webkit-text-stroke:0.45px currentColor;">local.properties</div>
<svg style="left:66px;top:146px;" width="38" height="34" viewBox="0 0 38 34"><rect x="0" y="0" width="36" height="33" fill="#8f979e"/><rect x="5" y="10" width="26" height="19" fill="#4f89b3"/></svg>
<div style="left:113px;top:143.5px;font-family:'Liberation Sans',sans-serif;font-size:30.52515312782408px;line-height:40.7px;color:#bbbbbb;font-weight:normal;white-space:pre;-webkit-text-stroke:0.45px currentColor;">Project</div>
<svg style="left:228px;top:157px;" width="24" height="14" viewBox="0 0 24 14"><path d="M0 0H23L11.5 13Z" fill="#afb1b3"/></svg>
<svg style="left:309px;top:144px;" width="38" height="38" viewBox="0 0 38 38"><circle cx="18" cy="18" r="15" fill="none" stroke="#afb1b3" stroke-width="3.5"/><path d="M18 3V13M18 23V33M3 18H13M23 18H33" stroke="#afb1b3" stroke-width="3.5"/></svg>
<svg style="left:380px;top:146px;" width="32" height="34" viewBox="0 0 32 34"><path d="M0 17H32" stroke="#afb1b3" stroke-width="5"/><path d="M6 1H26L16 11Z" fill="#afb1b3"/><path d="M6 33H26L16 22Z" fill="#afb1b3"/></svg>
<div style="left:439px;top:138px;width:2px;height:46px;background:#515860;"></div>
<svg style="left:467px;top:145px;" width="34" height="34" viewBox="0 0 34 34"><path d="M20.77 33.06L13.23 33.06L12.76 28.23L9.40 26.29L4.97 28.30L1.20 21.77L5.16 18.94L5.16 15.06L1.20 12.23L4.97 5.70L9.40 7.71L12.76 5.77L13.23 0.94L20.77 0.94L21.24 5.77L24.60 7.71L29.03 5.70L32.80 12.23L28.84 15.06L28.84 18.94L32.80 21.77L29.03 28.30L24.60 26.29L21.24 28.23Z" fill="#afb1b3"/><circle cx="17" cy="17" r="5.2" fill="#3d4452"/></svg>
<div style="left:536px;top:160px;width:31px;height:5px;background:#afb1b3;"></div>
<div style="left:-105px;top:269px;width:252px;height:30px;transform:rotate(-90deg);font-family:'Liberation Sans',sans-serif;font-size:29px;line-height:30px;color:#bbbbbb;white-space:pre;text-align:left">Resource Manager</div>
<svg style="left:8px;top:421px;" width="26" height="28" viewBox="0 0 26 28"><path d="M13 0L20 10H6Z" fill="#afb1b3"/><rect x="0" y="13" width="12" height="12" fill="#afb1b3"/><circle cx="19" cy="19" r="6.5" fill="#afb1b3"/></svg>
<div style="left:-42px;top:555px;width:130px;margin-left:-3px;height:30px;transform:rotate(-90deg);font-family:'Liberation Sans',sans-serif;font-size:30px;line-height:30px;color:#dddddd;white-space:pre"><u>1</u>: Project</div>
<svg style="left:4px;top:644px;" width="30" height="28" viewBox="0 0 30 28"><path d="M0 2H10L13 6H26V27H0Z" fill="#bbbbbb"/></svg>
<div style="left:-53px;top:1545px;width:152px;height:30px;transform:rotate(-90deg);font-family:'Liberation Sans',sans-serif;font-size:30px;line-height:30px;color:#bbbbbb;white-space:pre"><u>2</u>: Favorites</div>
<svg style="left:4px;top:1643px;" width="30" height="32" viewBox="0 0 30 32"><path d="M15 1L19 11L30 12L22 19L24 30L15 24L6 30L8 19L0 12L11 11Z" fill="#afb1b3"/></svg>
<div style="left:-56px;top:1797px;width:158px;height:30px;transform:rotate(-90deg);font-family:'Liberation Sans',sans-serif;font-size:30px;line-height:30px;color:#bbbbbb;white-space:pre"><u>7</u>: Structure</div>
<svg style="left:6px;top:1902px;" width="26" height="24" viewBox="0 0 26 24"><rect x="12" y="0" width="11" height="10" fill="#afb1b3"/><rect x="0" y="12" width="10" height="10" fill="#afb1b3"/><rect x="12" y="12" width="11" height="10" fill="#afb1b3"/></svg>
<div style="left:58px;top:1285.2px;font-family:'Liberation Sans',sans-serif;font-size:29.826897470039945px;line-height:39.8px;color:#bbbbbb;font-weight:normal;white-space:pre;-webkit-text-stroke:0.45px currentColor;">Run:</div>
<svg style="left:169px;top:1289px;" width="38" height="28" viewBox="0 0 38 28"><path d="M0.5 27.5C0.5 17 5 9 11 6.5C17 4 23 5.5 27 8.5C29 10 32 9.5 33 7C33.5 4.5 31.5 2.5 29 3.5L27 2.5C29 -0.5 35 -0.5 37 4C38.5 9 36 14 30 18.5C27.5 20.5 26 24 26 27.5H21.4C21.4 23 14.7 23 14.7 27.5H11.2C11.2 23 4.4 23 4.4 27.5Z" fill="#8e979e"/><path d="M6.5 8.5L10.6 15L16.7 10.7" fill="none" stroke="#3c3f41" stroke-width="0.9"/><circle cx="24" cy="11" r="1" fill="#3c3f41"/></svg>
<div style="left:218px;top:1283.4px;font-family:'Liberation Sans',sans-serif;font-size:31.61677371522813px;line-height:42.2px;color:#bbbbbb;font-weight:normal;white-space:pre;-webkit-text-stroke:0.45px currentColor;">/Users/vimerzhao/WorkProject/flutter_source...</div>
<svg style="left:888px;top:1294px;" width="19" height="19" viewBox="0 0 19 19"><path d="M1 1L18 18M18 1L1 18" stroke="#6e6e6e" stroke-width="2.2"/></svg>
<div style="left:138px;top:1330px;width:798px;height:5px;background:#747a80;"></div>
<svg style="left:3374px;top:1286px;" width="32" height="32" viewBox="0 0 32 32"><path d="M19.54 31.09L12.46 31.09L12.01 26.57L8.84 24.74L4.70 26.61L1.16 20.48L4.85 17.83L4.85 14.17L1.16 11.52L4.70 5.39L8.84 7.26L12.01 5.43L12.46 0.91L19.54 0.91L19.99 5.43L23.16 7.26L27.30 5.39L30.84 11.52L27.15 14.17L27.15 17.83L30.84 20.48L27.30 26.61L23.16 24.74L19.99 26.57Z" fill="#afb1b3"/><circle cx="16" cy="16" r="5" fill="#3e3f42"/></svg>
<div style="left:3443px;top:1299px;width:31px;height:5px;background:#afb1b3;"></div>
<svg style="left:69px;top:1358px;" width="27" height="32" viewBox="0 0 27 32"><path d="M1 1L26 16L1 31Z" fill="#61a060"/></svg>
<div style="left:67px;top:1429px;width:26px;height:26px;background:#5a5a5a;"></div>
<div style="left:56px;top:1484px;width:46px;height:2px;background:#505254;"></div>
<svg style="left:62px;top:1516px;" width="38" height="38" viewBox="0 0 38 38"><path d="M1 13C8 2 26 2 33 13C26 24 8 24 1 13Z" fill="#afb1b3"/><circle cx="17" cy="13" r="6" fill="#3e3f42"/><circle cx="17" cy="13" r="3" fill="#afb1b3"/><path d="M24 28H36L30 34Z" fill="#afb1b3"/></svg>
<div style="left:56px;top:1572px;width:46px;height:2px;background:#505254;"></div>
<svg style="left:64px;top:1605px;" width="32" height="26" viewBox="0 0 32 26"><rect x="0" y="0" width="14" height="11" fill="#afb1b3"/><rect x="17" y="0" width="13" height="11" fill="#afb1b3"/><rect x="0" y="14" width="30" height="11" fill="#afb1b3"/></svg>
<div style="left:56px;top:1660px;width:46px;height:2px;background:#505254;"></div>
<svg style="left:60px;top:1686px;" width="38" height="40" viewBox="0 0 38 40"><path d="M22 1L37 16L31 17L25 23L26 30L8 12L15 13L21 7Z" fill="#afb1b3"/><path d="M14 24L2 37" stroke="#afb1b3" stroke-width="3"/></svg>
<svg style="left:125px;top:1352px;" width="24" height="20" viewBox="0 0 24 20"><path d="M1 1H23L12 19Z" fill="#a4a4a4"/></svg>
<svg style="left:174px;top:1351px;" width="34" height="30" viewBox="0 0 34 30"><path d="M3 15L12 24L31 4" fill="none" stroke="#5a9e52" stroke-width="6"/></svg>
<div style="left:222px;top:1335px;width:1162px;height:60px;overflow:hidden">
<div style="left:0px;top:8.4px;font-family:'Liberation Sans',sans-serif;font-size:31.586113674919037px;line-height:42.1px;color:#bbbbbb;font-weight:bold;white-space:pre;-webkit-text-stroke:0.45px currentColor;">/Users/vimerzhao/WorkProject/flutter_source_code/src/flutter/shell/platform/android</div>
</div>
<div style="left:1394px;top:1347.0px;font-family:'Liberation Sans',sans-serif;font-size:28.01188460432574px;line-height:37.3px;color:#808080;font-weight:normal;white-space:pre;-webkit-text-stroke:0.45px currentColor;">1 s 875 ms</div>
<svg style="left:220px;top:1402px;" width="34" height="30" viewBox="0 0 34 30"><path d="M3 15L12 24L31 4" fill="none" stroke="#5a9e52" stroke-width="6"/></svg>
<div style="left:264px;top:1394.6px;font-family:'Liberation Sans',sans-serif;font-size:30.423820000963595px;line-height:40.6px;color:#bbbbbb;font-weight:normal;white-space:pre;-webkit-text-stroke:0.45px currentColor;">:updateDependencies</div>
<div style="left:1440px;top:1397.2px;font-family:'Liberation Sans',sans-serif;font-size:27.751834556370913px;line-height:37.0px;color:#808080;font-weight:normal;white-space:pre;-webkit-text-stroke:0.45px currentColor;">159 ms</div>
<div style="left:1542px;top:1335px;width:1878px;height:623px;overflow:hidden">
<div style="left:28px;top:-31.2px;font-family:'Liberation Mono',monospace;font-size:35.5px;line-height:58.6px;color:#f8f8f2;font-weight:normal;white-space:pre;letter-spacing:-1.3px;-webkit-text-stroke:0.4px currentColor">&quot;//third_party/robolectric/lib/ant-launcher-1.0.0.jar&quot;,</div>
<div style="left:28px;top:6.8px;font-family:'Liberation Mono',monospace;font-size:35.5px;line-height:58.6px;color:#f8f8f2;font-weight:normal;white-space:pre;letter-spacing:-1.3px;-webkit-text-stroke:0.4px currentColor">&quot;//third_party/robolectric/lib/lifecycle-viewmodel-2.1.0.jar&quot;,</div>
<div style="left:28px;top:44.8px;font-family:'Liberation Mono',monospace;font-size:35.5px;line-height:58.6px;color:#f8f8f2;font-weight:normal;white-space:pre;letter-spacing:-1.3px;-webkit-text-stroke:0.4px currentColor">&quot;//third_party/robolectric/lib/loader-1.0.0.jar&quot;,</div>
<div style="left:28px;top:82.8px;font-family:'Liberation Mono',monospace;font-size:35.5px;line-height:58.6px;color:#f8f8f2;font-weight:normal;white-space:pre;letter-spacing:-1.3px;-webkit-text-stroke:0.4px currentColor">&quot;//third_party/robolectric/lib/plexus-interpolation-1.11.jar&quot;,</div>
<div style="left:28px;top:120.8px;font-family:'Liberation Mono',monospace;font-size:35.5px;line-height:58.6px;color:#f8f8f2;font-weight:normal;white-space:pre;letter-spacing:-1.3px;-webkit-text-stroke:0.4px currentColor">&quot;//third_party/robolectric/lib/kotlinx-coroutines-core-common-1.1.1.jar&quot;,</div>
<div style="left:28px;top:158.8px;font-family:'Liberation Mono',monospace;font-size:35.5px;line-height:58.6px;color:#f8f8f2;font-weight:normal;white-space:pre;letter-spacing:-1.3px;-webkit-text-stroke:0.4px currentColor">&quot;//third_party/robolectric/lib/core-common-2.1.0.jar&quot;,</div>
<div style="left:28px;top:196.8px;font-family:'Liberation Mono',monospace;font-size:35.5px;line-height:58.6px;color:#f8f8f2;font-weight:normal;white-space:pre;letter-spacing:-1.3px;-webkit-text-stroke:0.4px currentColor">&quot;//third_party/robolectric/lib/jsr305-3.0.2.jar&quot;,</div>
<div style="left:28px;top:234.8px;font-family:'Liberation Mono',monospace;font-size:35.5px;line-height:58.6px;color:#f8f8f2;font-weight:normal;white-space:pre;letter-spacing:-1.3px;-webkit-text-stroke:0.4px currentColor">&quot;//third_party/robolectric/lib/wagon-provider-api-1.0-beta-6.jar&quot;,</div>
<div style="left:28px;top:272.8px;font-family:'Liberation Mono',monospace;font-size:35.5px;line-height:58.6px;color:#f8f8f2;font-weight:normal;white-space:pre;letter-spacing:-1.3px;-webkit-text-stroke:0.4px currentColor">&quot;//third_party/robolectric/lib/maven-ant-tasks-2.1.3.jar&quot;,</div>
<div style="left:28px;top:310.8px;font-family:'Liberation Mono',monospace;font-size:35.5px;line-height:58.6px;color:#f8f8f2;font-weight:normal;white-space:pre;letter-spacing:-1.3px;-webkit-text-stroke:0.4px currentColor">&quot;//third_party/robolectric/lib/javax.inject-1.jar&quot;,</div>
<div style="left:28px;top:348.8px;font-family:'Liberation Mono',monospace;font-size:35.5px;line-height:58.6px;color:#f8f8f2;font-weight:normal;white-space:pre;letter-spacing:-1.3px;-webkit-text-stroke:0.4px currentColor">&quot;//third_party/robolectric/lib/viewpager-1.0.0.jar&quot;,</div>
<div style="left:28px;top:386.8px;font-family:'Liberation Mono',monospace;font-size:35.5px;line-height:58.6px;color:#f8f8f2;font-weight:normal;white-space:pre;letter-spacing:-1.3px;-webkit-text-stroke:0.4px currentColor">&quot;//third_party/robolectric/lib/plexus-container-default-1.0-alpha-9-stable-1.jar&quot;,</div>
<div style="left:28px;top:424.8px;font-family:'Liberation Mono',monospace;font-size:35.5px;line-height:58.6px;color:#f8f8f2;font-weight:normal;white-space:pre;letter-spacing:-1.3px;-webkit-text-stroke:0.4px currentColor"></div>
<div style="left:28px;top:462.8px;font-family:'Liberation Mono',monospace;font-size:35.5px;line-height:58.6px;color:#f8f8f2;font-weight:normal;white-space:pre;letter-spacing:-1.3px;-webkit-text-stroke:0.4px currentColor">BUILD SUCCESSFUL in 1s</div>
<div style="left:28px;top:500.8px;font-family:'Liberation Mono',monospace;font-size:35.5px;line-height:58.6px;color:#f8f8f2;font-weight:normal;white-space:pre;letter-spacing:-1.3px;-webkit-text-stroke:0.4px currentColor">1 actionable task: 1 executed</div>
<div style="left:28px;top:538.8px;font-family:'Liberation Mono',monospace;font-size:35.5px;line-height:58.6px;color:#a482f0;font-weight:normal;white-space:pre;letter-spacing:-1.3px;-webkit-text-stroke:0.4px currentColor">19:52:56: Task execution finished &#x27;updateDependencies&#x27;.</div>
</div>
<div style="left:3428px;top:1348px;width:56px;height:56px;background:#55585b;border-radius:9px"></div>
<svg style="left:3440px;top:1360px;" width="34" height="34" viewBox="0 0 34 34"><rect x="1" y="1" width="30" height="4" fill="#afb1b3"/><rect x="1" y="12" width="22" height="4" fill="#afb1b3"/><rect x="1" y="23" width="8" height="4" fill="#afb1b3"/><path d="M22 14A6.5 6.5 0 0 1 22 27H16" fill="none" stroke="#afb1b3" stroke-width="3.5"/><path d="M18 20L12 25L18 31Z" fill="#afb1b3"/></svg>
<div style="left:3428px;top:1416px;width:56px;height:56px;background:#55585b;border-radius:9px"></div>
<svg style="left:3440px;top:1428px;" width="34" height="34" viewBox="0 0 34 34"><rect x="1" y="7" width="10" height="4" fill="#afb1b3"/><rect x="1" y="17" width="10" height="4" fill="#afb1b3"/><rect x="1" y="26" width="30" height="4" fill="#afb1b3"/><path d="M22 0V18" stroke="#afb1b3" stroke-width="3.5"/><path d="M14 14H30L22 22Z" fill="#afb1b3"/></svg>
<div style="left:3492px;top:1335px;width:4px;height:623px;background:#2f3133;"></div>
<svg style="left:77px;top:1971px;" width="28" height="30" viewBox="0 0 28 30"><path d="M3 1V29" stroke="#afb1b3" stroke-width="4"/><path d="M3 25H10A8 8 0 0 0 18 17V8" fill="none" stroke="#afb1b3" stroke-width="4"/><path d="M12 9L18 2L24 9Z" fill="#afb1b3"/></svg>
<div style="left:115px;top:1969.3px;font-family:'Liberation Sans',sans-serif;font-size:30.698460752128014px;line-height:40.9px;color:#bbbbbb;font-weight:normal;white-space:pre;-webkit-text-stroke:0.45px currentColor;">9: Version Control</div>
<div style="left:115px;top:2004px;width:15px;height:2px;background:#bbbbbb;"></div>
<svg style="left:418px;top:1971px;" width="30" height="24" viewBox="0 0 30 24"><rect x="0" y="0" width="28" height="23" fill="#afb1b3"/><path d="M4 5L10 9L4 13" fill="none" stroke="#3e3f42" stroke-width="2.2"/><rect x="12" y="15" width="10" height="2.5" fill="#3e3f42"/></svg>
<div style="left:457px;top:1967.7px;font-family:'Liberation Sans',sans-serif;font-size:32.287143861390234px;line-height:43.0px;color:#bbbbbb;font-weight:normal;white-space:pre;-webkit-text-stroke:0.45px currentColor;">Terminal</div>
<svg style="left:632px;top:1972px;" width="22" height="28" viewBox="0 0 22 28"><path d="M1 1L21 14L1 27Z" fill="#afb1b3"/></svg>
<div style="left:668px;top:1970.1px;font-family:'Liberation Sans',sans-serif;font-size:29.87006099177937px;line-height:39.8px;color:#dddddd;font-weight:normal;white-space:pre;-webkit-text-stroke:0.45px currentColor;">4: Run</div>
<div style="left:668px;top:2004px;width:17px;height:2px;background:#dddddd;"></div>
<svg style="left:808px;top:1973px;" width="26" height="26" viewBox="0 0 26 26"><rect x="0" y="1" width="5" height="5" fill="#afb1b3"/><rect x="8" y="1" width="18" height="4" fill="#afb1b3"/><rect x="0" y="10" width="5" height="5" fill="#afb1b3"/><rect x="8" y="10" width="18" height="4" fill="#afb1b3"/><rect x="0" y="19" width="5" height="5" fill="#afb1b3"/><rect x="8" y="19" width="18" height="4" fill="#afb1b3"/></svg>
<div style="left:844px;top:1971.1px;font-family:'Liberation Sans',sans-serif;font-size:28.915137989222142px;line-height:38.6px;color:#bbbbbb;font-weight:normal;white-space:pre;-webkit-text-stroke:0.45px currentColor;">TODO</div>
<svg style="left:3297px;top:1969px;" width="34" height="33" viewBox="0 0 34 33"><circle cx="16" cy="16" r="15.5" fill="#5a9b56"/><text x="16" y="26" font-family="Liberation Sans" font-size="24" font-weight="bold" fill="#ffffff" text-anchor="middle">1</text></svg>
<div style="left:3338px;top:1971.8px;font-family:'Liberation Sans',sans-serif;font-size:28.20263705759889px;line-height:37.6px;color:#bbbbbb;font-weight:normal;white-space:pre;-webkit-text-stroke:0.45px currentColor;">Event Log</div>
<svg style="left:10px;top:2022px;" width="30" height="24" viewBox="0 0 30 24"><rect x="5" y="2" width="22" height="22" fill="none" stroke="#afb1b3" stroke-width="2.5"/><rect x="0" y="8" width="3" height="20" fill="#afb1b3"/></svg>
<div style="left:69px;top:2021.1px;font-family:'Liberation Sans',sans-serif;font-size:30.891447533812663px;line-height:41.2px;color:#bbbbbb;font-weight:normal;white-space:pre;-webkit-text-stroke:0.45px currentColor;">Frameworks Detected: Android framework is detected. // Configure (33 minutes ago)</div>
<div style="left:2506px;top:2021.2px;font-family:'Liberation Sans',sans-serif;font-size:30.773073560634447px;line-height:41.0px;color:#bbbbbb;font-weight:normal;white-space:pre;-webkit-text-stroke:0.45px currentColor;">73:41</div>
<div style="left:2628px;top:2034.9px;font-family:'Liberation Sans',sans-serif;font-size:17.13979646491698px;line-height:22.9px;color:#bbbbbb;font-weight:normal;white-space:pre;-webkit-text-stroke:0.45px currentColor;">LF</div>
<div style="left:2678px;top:2022.0px;font-family:'Liberation Sans',sans-serif;font-size:30.005515719801434px;line-height:40.0px;color:#bbbbbb;font-weight:normal;white-space:pre;-webkit-text-stroke:0.45px currentColor;">UTF-8</div>
<div style="left:2796px;top:2022.4px;font-family:'Liberation Sans',sans-serif;font-size:29.60327343888988px;line-height:39.5px;color:#bbbbbb;font-weight:normal;white-space:pre;-webkit-text-stroke:0.45px currentColor;">2 spaces*</div>
<div style="left:2961px;top:2022.1px;font-family:'Liberation Sans',sans-serif;font-size:29.86066726319826px;line-height:39.8px;color:#bbbbbb;font-weight:normal;white-space:pre;-webkit-text-stroke:0.45px currentColor;">Git: master</div>
<svg style="left:3138px;top:2018px;" width="32" height="30" viewBox="0 0 32 30"><defs><linearGradient id="kg" x1="0" y1="0" x2="1" y2="1"><stop offset="0" stop-color="#8bd16b"/><stop offset="0.5" stop-color="#3ea7c4"/><stop offset="1" stop-color="#5c6ee8"/></linearGradient></defs><path d="M0 0H10V32H0Z" fill="url(#kg)"/><path d="M14 32L32 0H22L10 20V32Z" fill="url(#kg)"/><path d="M8 0H32L16 16L8 8Z" fill="#3e3f42" opacity="0"/></svg>
<svg style="left:3195px;top:2016px;" width="32" height="30" viewBox="0 0 32 30"><path d="M6 14V8A7 7 0 0 1 20 8" fill="none" stroke="#afb1b3" stroke-width="3"/><rect x="10" y="14" width="20" height="16" fill="#afb1b3"/></svg>
<svg style="left:3258px;top:2016px;" width="34" height="30" viewBox="0 0 34 30"><path d="M8 10C8 2 26 2 26 10H33V14H1V10Z" fill="#afb1b3"/><circle cx="12" cy="22" r="5" fill="none" stroke="#afb1b3" stroke-width="2.5"/><circle cx="22" cy="22" r="5" fill="none" stroke="#afb1b3" stroke-width="2.5"/></svg>
<div style="left:3316px;top:2018px;width:180px;height:24px;background:#5a5c5e;"></div>
<div style="left:3316px;top:2018px;width:123px;height:24px;background:#6b6d6f;"></div>
<div style="left:3322px;top:2022.0px;font-family:'Liberation Sans',sans-serif;font-size:30px;line-height:40.0px;color:#bbbbbb;font-weight:normal;white-space:pre;-webkit-text-stroke:0.45px currentColor;">2111 of 3972M</div>
<svg style="left:0;top:0" width="3496" height="2042" viewBox="0 0 3496 2042"><rect x="177" y="696" width="241" height="44" rx="2" fill="none" stroke="#ed1c24" stroke-width="6"/><rect x="184" y="803" width="301" height="49" rx="2" fill="none" stroke="#ed1c24" stroke-width="6"/><rect x="185" y="1377" width="442" height="84" rx="2" fill="none" stroke="#ed1c24" stroke-width="6"/><rect x="2278" y="493" width="1084" height="382" rx="2" fill="none" stroke="#ed1c24" stroke-width="6"/><path d="M418.0 702.0L752.8 491.3" stroke="#ed1c24" stroke-width="5" stroke-linecap="round"/><path d="M774.0 478.0L755.0 505.9L752.8 491.3L740.6 483.1Z" fill="#ed1c24"/><path d="M1236.5 491.0L569.3 1352.2" stroke="#ed1c24" stroke-width="5" stroke-linecap="round"/><path d="M554.0 1372.0L562.3 1339.2L569.3 1352.2L583.7 1355.8Z" fill="#ed1c24"/><path d="M1245.0 501.0L1894.3 1304.6" stroke="#ed1c24" stroke-width="5" stroke-linecap="round"/><path d="M1910.0 1324.0L1880.0 1308.4L1894.3 1304.6L1901.0 1291.4Z" fill="#ed1c24"/><path d="M2099.0 1344.0L2302.1 923.5" stroke="#ed1c24" stroke-width="5" stroke-linecap="round"/><path d="M2313.0 901.0L2311.7 934.8L2302.1 923.5L2287.4 923.0Z" fill="#ed1c24"/></svg></body></html>
